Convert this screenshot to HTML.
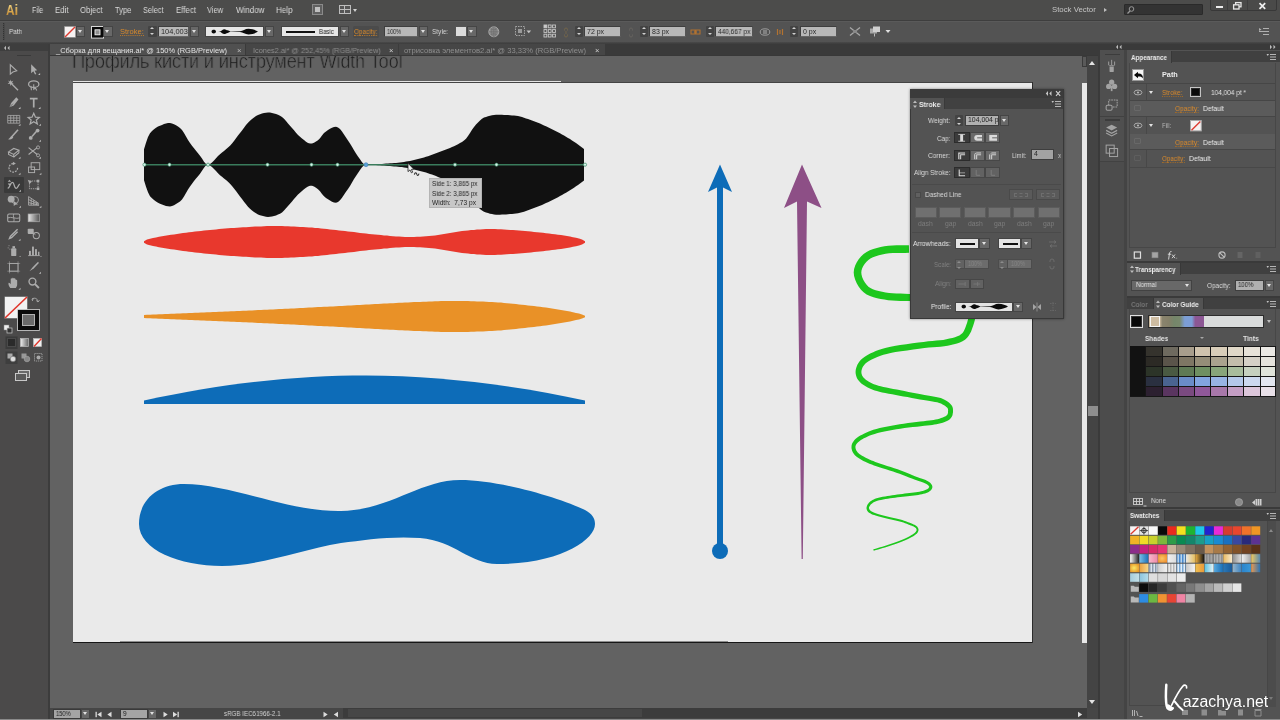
<!DOCTYPE html>
<html><head><meta charset="utf-8"><title>Ai</title>
<style>
html,body{margin:0;padding:0;background:#535353;}
body{width:1280px;height:720px;position:relative;overflow:hidden;font-family:"Liberation Sans",sans-serif;font-size:7px;color:#d6d6d6;}
#root div,#root span,.abs{position:absolute;box-sizing:border-box;}
#root span{white-space:nowrap;will-change:transform;}
#root{position:absolute;left:0;top:0;width:1280px;height:720px;overflow:hidden;}
</style></head><body><div id="root">
<div style="left:0px;top:0px;width:1280px;height:20px;background:#4c4c4b;"></div><div style="left:0px;top:19.8px;width:1280px;height:1px;background:#3e3e3e;"></div><div style="left:0px;top:20.8px;width:1280px;height:20.7px;background:#535353;border-top:1px solid #5a5a5a;"></div><div style="left:0px;top:41.5px;width:1280px;height:2.5px;background:linear-gradient(#4a4a4a,#3c3c3c);"></div><div style="left:0px;top:44px;width:1280px;height:12px;background:#3b3b3b;"></div><div style="left:50px;top:56px;width:1037px;height:652px;background:#626262;"></div><div style="left:72.7px;top:83px;width:959.5px;height:558.8px;background:#eaeaea;"></div><div style="left:72.7px;top:82px;width:960.5px;height:1px;background:#444;"></div><div style="left:72.7px;top:81px;width:488px;height:1px;background:#e4e4e4;"></div><div style="left:72.7px;top:641.8px;width:960.5px;height:1.2px;background:#161616;"></div><div style="left:1032.2px;top:82px;width:1px;height:561px;background:#2c2c2c;"></div><div style="left:120px;top:640.8px;width:608px;height:1px;background:#8e8e8e;"></div><div style="left:50px;top:56px;width:1034px;height:26px;overflow:hidden"><span id="ttl" style="left:22.3px;top:-7.4px;font-size:20.5px;line-height:24px;color:#1c1c1c;-webkit-text-stroke:0.6px #626262;transform-origin:0 0;transform:scaleX(0.888);letter-spacing:-0.2px">Профиль кисти и инструмент Width Tool</span></div><span style="left:6.3px;top:0.53px;font-size:15.5px;line-height:17.5px;color:#e3a53c;transform-origin:0 0;transform:scaleX(0.768);font-weight:bold;background:linear-gradient(#f2d27e 20%,#c98a2c 85%);-webkit-background-clip:text;background-clip:text;color:transparent;">Ai</span><span style="left:32px;top:5.05px;font-size:8.6px;line-height:10.6px;color:#dadada;transform-origin:0 0;transform:scaleX(0.808);">File</span><span style="left:55px;top:5.05px;font-size:8.6px;line-height:10.6px;color:#dadada;transform-origin:0 0;transform:scaleX(0.911);">Edit</span><span style="left:80px;top:5.05px;font-size:8.6px;line-height:10.6px;color:#dadada;transform-origin:0 0;transform:scaleX(0.905);">Object</span><span style="left:114.5px;top:5.05px;font-size:8.6px;line-height:10.6px;color:#dadada;transform-origin:0 0;transform:scaleX(0.885);">Type</span><span style="left:142.5px;top:5.05px;font-size:8.6px;line-height:10.6px;color:#dadada;transform-origin:0 0;transform:scaleX(0.858);">Select</span><span style="left:175.5px;top:5.05px;font-size:8.6px;line-height:10.6px;color:#dadada;transform-origin:0 0;transform:scaleX(0.916);">Effect</span><span style="left:207px;top:5.05px;font-size:8.6px;line-height:10.6px;color:#dadada;transform-origin:0 0;transform:scaleX(0.866);">View</span><span style="left:235.5px;top:5.05px;font-size:8.6px;line-height:10.6px;color:#dadada;transform-origin:0 0;transform:scaleX(0.932);">Window</span><span style="left:276px;top:5.05px;font-size:8.6px;line-height:10.6px;color:#dadada;transform-origin:0 0;transform:scaleX(0.933);">Help</span><div style="left:312px;top:4px;width:11px;height:11px;background:#606060;border:1px solid #8a8a8a;"><div style="left:2px;top:2px;width:5px;height:5px;background:#c0c0c0;"></div></div><div style="left:339px;top:5px;width:12px;height:9px;background:#bdbdbd;"><div style="left:1px;top:1px;width:4px;height:3px;background:#555;"></div><div style="left:6px;top:1px;width:5px;height:3px;background:#555;"></div><div style="left:1px;top:5px;width:4px;height:3px;background:#555;"></div><div style="left:6px;top:5px;width:5px;height:3px;background:#555;"></div></div><div style="left:352.5px;top:9px;border:2.5px solid transparent;border-top:3px solid #d0d0d0;width:0;height:0"></div><span style="left:1052px;top:4.84px;font-size:7.8px;line-height:9.8px;color:#c4c4c4;transform-origin:0 0;transform:scaleX(0.993);">Stock Vector</span><div style="left:1104px;top:7.5px;border:2.2px solid transparent;border-left:3px solid #bdbdbd;width:0;height:0"></div><div style="left:1124px;top:4px;width:79px;height:11px;background:#333;border:1px solid #2a2a2a;border-radius:1px;"></div><svg class="abs" style="left:1126px;top:5px" width="10" height="10"><circle cx="5.5" cy="4" r="2.3" fill="none" stroke="#999" stroke-width="1"/><path d="M4,6 L1.5,8.5" stroke="#999" stroke-width="1.2"/></svg><div style="left:1209.7px;top:-1px;width:67px;height:11.6px;background:#4a4a49;border:1px solid #383838;border-radius:0 0 2px 2px;"></div><div style="left:1227.3px;top:0px;width:1px;height:10px;background:#3e3e3e;"></div><div style="left:1247px;top:0px;width:1px;height:10px;background:#3e3e3e;"></div><div style="left:1215.8px;top:5.8px;width:7.6px;height:1.8px;background:#ececec;"></div><svg class="abs" style="left:1232px;top:0.5px" width="11" height="10"><rect x="3.6" y="1.6" width="5.4" height="4.2" fill="none" stroke="#e8e8e8" stroke-width="1.3"/><rect x="1.6" y="3.8" width="5.4" height="4.2" fill="#4a4a49" stroke="#e8e8e8" stroke-width="1.3"/></svg><svg class="abs" style="left:1257.5px;top:1.5px" width="9" height="8"><path d="M1.5,1.2 L7.2,6.8 M7.2,1.2 L1.5,6.8" stroke="#f0f0f0" stroke-width="1.7"/></svg><div style="left:3px;top:22.5px;width:2px;height:17px;background:#4a4a4a;border-left:1px dotted #333;"></div><span style="left:9.3px;top:27.33px;font-size:7.2px;line-height:9.2px;color:#dadada;transform-origin:0 0;transform:scaleX(0.891);">Path</span><svg class="abs" style="left:63.5px;top:25.8px" width="12" height="12"><rect x="0.4" y="0.4" width="11.2" height="11" fill="#f6f2f2" stroke="#8a8a8a" stroke-width="0.6"/><path d="M1,11 L11,1" stroke="#dd3a30" stroke-width="1.5"/></svg><div style="left:75.5px;top:26px;width:9.5px;height:11px;background:#686868;border:1px solid #454545;"><div style="left:1.25px;top:2.9px;border:2.5px solid transparent;border-top:3px solid #e0e0e0;width:0;height:0"></div></div><svg class="abs" style="left:90.5px;top:25.5px" width="13" height="13"><rect x="0.5" y="0.5" width="12" height="11.6" fill="#080808" stroke="#d8d8d8"/><rect x="4" y="3.8" width="5" height="5" fill="#8e8e8e" stroke="#f0f0f0" stroke-width="0.9"/></svg><div style="left:103px;top:26px;width:9.5px;height:11px;background:#686868;border:1px solid #454545;"><div style="left:1.25px;top:2.9px;border:2.5px solid transparent;border-top:3px solid #e0e0e0;width:0;height:0"></div></div><span style="left:120px;top:27.33px;font-size:7.2px;line-height:9.2px;color:#d98a2c;transform-origin:0 0;transform:scaleX(1.043);border-bottom:1px dotted #b9782a;height:9.4px;">Stroke:</span><div style="left:148.3px;top:25.8px;width:8.4px;height:11.2px;background:#434343;border-radius:1px;"></div><div style="left:150.3px;top:25.4px;border:2.2px solid transparent;border-bottom:2.8px solid #d0d0d0;width:0;height:0"></div><div style="left:150.3px;top:33px;border:2.2px solid transparent;border-top:2.8px solid #d0d0d0;width:0;height:0"></div><div style="left:157.5px;top:25.8px;width:31px;height:11.2px;background:#b8b8b8;border:1px solid #3e3e3e;border-right-color:#555;border-bottom-color:#666;"><span style="left:2.2px;top:0.33px;font-size:7px;line-height:9px;color:#2a2a2a;transform-origin:0 0;transform:scaleX(1.059);">104,003</span></div><div style="left:189.5px;top:26px;width:9.5px;height:11px;background:#686868;border:1px solid #454545;"><div style="left:1.25px;top:2.9px;border:2.5px solid transparent;border-top:3px solid #e0e0e0;width:0;height:0"></div></div><div style="left:205px;top:26px;width:59px;height:11.2px;background:#e6e6e6;border:1px solid #444;"></div><svg class="abs" style="left:205px;top:26px" width="60" height="11" viewBox="0 0 60 11"><path d="M6.5,5.6 C6.5,3 11,3 11,5.6 C11,5.6 12.5,5.5 14.5,5.5 C16,5.5 17.5,3.2 19.5,3.2 C20.5,3.2 21.5,4.3 22.5,4.3 C23.5,4.3 24.5,5.3 25.5,5.4 L35,5.2 C38,5 40,2.8 43.5,2.8 C47.5,2.8 51,4.4 53,5.6 C51,6.8 47.5,8.4 43.5,8.4 C40,8.4 38,6.2 35,6 L25.5,5.8 C24.5,5.9 23.5,6.9 22.5,6.9 C21.5,6.9 20.5,8 19.5,8 C17.5,8 16,5.7 14.5,5.7 C12.5,5.7 11,5.6 11,5.6 C11,8.2 6.5,8.2 6.5,5.6Z" fill="#0a0a0a"/></svg><div style="left:264.5px;top:26px;width:9.5px;height:11px;background:#686868;border:1px solid #454545;"><div style="left:1.25px;top:2.9px;border:2.5px solid transparent;border-top:3px solid #e0e0e0;width:0;height:0"></div></div><div style="left:280.8px;top:26px;width:58px;height:11.2px;background:#e6e6e6;border:1px solid #444;"><div style="left:4px;top:4.2px;width:29.5px;height:1.5px;background:#111;"></div><span style="left:37.7px;top:0.72px;font-size:6.6px;line-height:8.6px;color:#222;transform-origin:0 0;transform:scaleX(0.917);">Basic</span></div><div style="left:339.5px;top:26px;width:9.5px;height:11px;background:#686868;border:1px solid #454545;"><div style="left:1.25px;top:2.9px;border:2.5px solid transparent;border-top:3px solid #e0e0e0;width:0;height:0"></div></div><div style="left:352.5px;top:25.5px;width:26.5px;height:12px;background:#4b4b4b;border-radius:1.5px;"></div><span style="left:354px;top:27.33px;font-size:7.2px;line-height:9.2px;color:#d98a2c;transform-origin:0 0;transform:scaleX(0.890);border-bottom:1px dotted #b9782a;height:9.4px;">Opacity:</span><div style="left:383.8px;top:25.8px;width:34.5px;height:11.2px;background:#b8b8b8;border:1px solid #3e3e3e;border-right-color:#555;border-bottom-color:#666;"><span style="left:2.2px;top:0.33px;font-size:7px;line-height:9px;color:#2a2a2a;transform-origin:0 0;transform:scaleX(0.782);">100%</span></div><div style="left:418.8px;top:26px;width:9.5px;height:11px;background:#686868;border:1px solid #454545;"><div style="left:1.25px;top:2.9px;border:2.5px solid transparent;border-top:3px solid #e0e0e0;width:0;height:0"></div></div><span style="left:432px;top:27.33px;font-size:7.2px;line-height:9.2px;color:#dadada;transform-origin:0 0;transform:scaleX(0.900);">Style:</span><div style="left:455px;top:26px;width:11.5px;height:11.2px;background:#dcdcdc;border:1px solid #555;"></div><div style="left:467px;top:26px;width:9.5px;height:11px;background:#686868;border:1px solid #454545;"><div style="left:1.25px;top:2.9px;border:2.5px solid transparent;border-top:3px solid #e0e0e0;width:0;height:0"></div></div><svg class="abs" style="left:487px;top:24.5px" width="14" height="14"><circle cx="6.8" cy="6.8" r="5" fill="#8a8a8a" stroke="#b8b8b8" stroke-width="0.8"/><path d="M2,6.8 H11.6 M6.8,2 V11.6 M3.5,3.6 C5.5,5.2 8,5.2 10,3.6 M3.5,10 C5.5,8.4 8,8.4 10,10" stroke="#6a6a6a" stroke-width="0.6" fill="none"/><ellipse cx="6.8" cy="6.8" rx="2.2" ry="5" fill="none" stroke="#6a6a6a" stroke-width="0.5"/></svg><svg class="abs" style="left:514px;top:25px" width="20" height="13"><rect x="1.5" y="1.5" width="9" height="9" fill="none" stroke="#a4a4a4" stroke-dasharray="1.5 1"/><rect x="4" y="4" width="4" height="4" fill="#9a9a9a"/><path d="M12.5,5.5 l2.3,2.8 l2.3,-2.8z" fill="#c4c4c4"/></svg><svg class="abs" style="left:543px;top:23.5px" width="14" height="15"><g fill="none" stroke="#c8c8c8" stroke-width="0.9"><rect x="1" y="1" width="2.8" height="2.8" fill="#c8c8c8"/><rect x="5.3" y="1" width="2.8" height="2.8"/><rect x="9.6" y="1" width="2.8" height="2.8"/><rect x="1" y="5.6" width="2.8" height="2.8"/><rect x="5.3" y="5.6" width="2.8" height="2.8"/><rect x="9.6" y="5.6" width="2.8" height="2.8"/><rect x="1" y="10.2" width="2.8" height="2.8"/><rect x="5.3" y="10.2" width="2.8" height="2.8"/><rect x="9.6" y="10.2" width="2.8" height="2.8"/></g></svg><svg class="abs" style="left:561.5px;top:26.5px" width="8" height="11"><path d="M2.5,3.5 v-1 a1.5,1.5 0 0 1 3,0 v1 M2.5,7.5 v1 a1.5,1.5 0 0 0 3,0 v-1 M4,4 v3" stroke="#76664a" fill="none" stroke-width="0.9"/></svg><div style="left:574.6px;top:25.8px;width:8.4px;height:11.2px;background:#434343;border-radius:1px;"></div><div style="left:576.6px;top:25.4px;border:2.2px solid transparent;border-bottom:2.8px solid #d0d0d0;width:0;height:0"></div><div style="left:576.6px;top:33px;border:2.2px solid transparent;border-top:2.8px solid #d0d0d0;width:0;height:0"></div><div style="left:583.8px;top:25.8px;width:37.5px;height:11.2px;background:#b8b8b8;border:1px solid #3e3e3e;border-right-color:#555;border-bottom-color:#666;"><span style="left:2.2px;top:0.33px;font-size:7px;line-height:9px;color:#2a2a2a;transform-origin:0 0;transform:scaleX(0.993);">72 px</span></div><svg class="abs" style="left:626.5px;top:26.5px" width="8" height="11"><path d="M2.5,3.5 v-1 a1.5,1.5 0 0 1 3,0 v1 M2.5,7.5 v1 a1.5,1.5 0 0 0 3,0 v-1" stroke="#686460" fill="none" stroke-width="0.9"/></svg><div style="left:639.6px;top:25.8px;width:8.4px;height:11.2px;background:#434343;border-radius:1px;"></div><div style="left:641.6px;top:25.4px;border:2.2px solid transparent;border-bottom:2.8px solid #d0d0d0;width:0;height:0"></div><div style="left:641.6px;top:33px;border:2.2px solid transparent;border-top:2.8px solid #d0d0d0;width:0;height:0"></div><div style="left:648.8px;top:25.8px;width:37.5px;height:11.2px;background:#b8b8b8;border:1px solid #3e3e3e;border-right-color:#555;border-bottom-color:#666;"><span style="left:2.2px;top:0.33px;font-size:7px;line-height:9px;color:#2a2a2a;transform-origin:0 0;transform:scaleX(0.993);">83 px</span></div><svg class="abs" style="left:690px;top:26.5px" width="12" height="10"><path d="M1,3 h4 v4 h-4z M6,3 h4 v4 h-4z M4,5 h3" stroke="#b27230" fill="none" stroke-width="1.1"/></svg><div style="left:705.8px;top:25.8px;width:8.4px;height:11.2px;background:#434343;border-radius:1px;"></div><div style="left:707.8px;top:25.4px;border:2.2px solid transparent;border-bottom:2.8px solid #d0d0d0;width:0;height:0"></div><div style="left:707.8px;top:33px;border:2.2px solid transparent;border-top:2.8px solid #d0d0d0;width:0;height:0"></div><div style="left:715px;top:25.8px;width:37.5px;height:11.2px;background:#b8b8b8;border:1px solid #3e3e3e;border-right-color:#555;border-bottom-color:#666;"><span style="left:2.2px;top:0.33px;font-size:7px;line-height:9px;color:#2a2a2a;transform-origin:0 0;transform:scaleX(0.932);">440,667 px</span></div><svg class="abs" style="left:758px;top:25.5px" width="14" height="12"><ellipse cx="7" cy="6" rx="4.8" ry="3.2" fill="none" stroke="#a4a4a4" stroke-width="0.9"/><rect x="5" y="4" width="4" height="4" fill="#808080"/></svg><svg class="abs" style="left:775px;top:26.5px" width="10" height="10"><path d="M2.5,2 v6 M5,3 v4 M7.5,2 v6" stroke="#b27230" stroke-width="1.2"/></svg><div style="left:790.1px;top:25.8px;width:8.4px;height:11.2px;background:#434343;border-radius:1px;"></div><div style="left:792.1px;top:25.4px;border:2.2px solid transparent;border-bottom:2.8px solid #d0d0d0;width:0;height:0"></div><div style="left:792.1px;top:33px;border:2.2px solid transparent;border-top:2.8px solid #d0d0d0;width:0;height:0"></div><div style="left:800px;top:25.8px;width:37.2px;height:11.2px;background:#b8b8b8;border:1px solid #3e3e3e;border-right-color:#555;border-bottom-color:#666;"><span style="left:2.2px;top:0.33px;font-size:7px;line-height:9px;color:#2a2a2a;transform-origin:0 0;transform:scaleX(0.967);">0 px</span></div><svg class="abs" style="left:848px;top:24.5px" width="14" height="13"><path d="M2,2.5 L12,10.5 M12,2.5 L2,10.5" stroke="#a8a8a8" stroke-width="1.3"/><rect x="5" y="5" width="4" height="3" fill="#8a8a8a"/></svg><svg class="abs" style="left:868px;top:25px" width="26" height="13"><rect x="2" y="3.5" width="7" height="5" fill="#a8a8a8"/><rect x="5" y="1.5" width="7" height="5.5" fill="#d0d0d0"/><path d="M6.5,8.5 v3" stroke="#bbb"/><path d="M17.5,5 l2.5,3 l2.5,-3z" fill="#e0e0e0"/></svg><svg class="abs" style="left:1258px;top:27px" width="12" height="9"><path d="M5,1.5 h6 M1,4.5 h10 M5,7.5 h6" stroke="#b0b0b0" stroke-width="1"/><path d="M1,1 l2.5,1.5 l-2.5,1.5z" fill="#b0b0b0"/></svg><div style="left:50px;top:44px;width:555px;height:11.6px;background:#464646;"></div><div style="left:50px;top:44px;width:195.5px;height:11.6px;background:#505050;border-right:1px solid #3a3a3a;"></div><span style="left:56.3px;top:45.63px;font-size:7.4px;line-height:9.4px;color:#e4e4e4;transform-origin:0 0;transform:scaleX(1.012);">_Сборка для вещания.ai* @ 150% (RGB/Preview)</span><span style="left:236.5px;top:45.59px;font-size:7.5px;line-height:9.5px;color:#bcbcbc;transform-origin:0 0;transform:scaleX(1.027);">×</span><span style="left:252.5px;top:45.63px;font-size:7.4px;line-height:9.4px;color:#8e8e8e;transform-origin:0 0;transform:scaleX(0.993);">Icones2.ai* @ 252,45% (RGB/Preview)</span><span style="left:388.8px;top:45.59px;font-size:7.5px;line-height:9.5px;color:#cfcfcf;transform-origin:0 0;transform:scaleX(1.027);">×</span><div style="left:397.5px;top:44px;width:1px;height:11.6px;background:#3c3c3c;"></div><span style="left:403.8px;top:45.63px;font-size:7.4px;line-height:9.4px;color:#8e8e8e;transform-origin:0 0;transform:scaleX(1.032);">отрисовка элементов2.ai* @ 33,33% (RGB/Preview)</span><span style="left:594.5px;top:45.59px;font-size:7.5px;line-height:9.5px;color:#cfcfcf;transform-origin:0 0;transform:scaleX(1.027);">×</span><div style="left:604.5px;top:44px;width:676px;height:11.6px;background:#3a3a3a;"></div><div style="left:0px;top:55.4px;width:1100px;height:0.8px;background:#383838;"></div><div style="left:0px;top:44px;width:47.5px;height:676px;background:#4b4a4a;"></div><div style="left:0px;top:44px;width:48px;height:7px;background:#3e3e3e;"></div><svg class="abs" style="left:1.5px;top:44.8px" width="10" height="6"><path d="M4,0.8 l-2,2.2 l2,2.2z M7.5,0.8 l-2,2.2 l2,2.2z" fill="#bbb"/></svg><div style="left:47.5px;top:44px;width:2.2px;height:676px;background:#3c3c3c;"></div><div style="left:17px;top:54.5px;width:14px;height:1.5px;background:#3a3a3a;"></div><div style="left:4px;top:177px;width:20px;height:16px;background:#3a3a3a;border-radius:1px;"></div><svg class="abs" style="left:6.26px;top:62.62px" width="15.48" height="13.76" viewBox="0 0 18 16"><path d="M5,2 L5,13 L8,10.5 L12.5,9 Z" fill="none" stroke="#acacac" stroke-width="1.3"/></svg><svg class="abs" style="left:26.26px;top:62.62px" width="15.48" height="13.76" viewBox="0 0 18 16"><path d="M6,1.5 L6,12 L8.5,9.5 L10.5,13.5 L12,12.8 L10,9 L13,8.5 Z" fill="#acacac"/><path d="M14,14 l2.4,0 l0,-2.4z" fill="#bdbdbd"/></svg><svg class="abs" style="left:6.26px;top:79.07px" width="15.48" height="13.76" viewBox="0 0 18 16"><path d="M5,4 L14,13" stroke="#acacac" stroke-width="1.6"/><path d="M5,0.5 L6,3 L8.5,2 L7,4 L9,5.5 L6.3,5.5 L5.5,8 L4.5,5.5 L1.8,5.8 L3.8,4 L2.5,1.8 L4.6,3Z" fill="#acacac"/></svg><svg class="abs" style="left:26.26px;top:79.07px" width="15.48" height="13.76" viewBox="0 0 18 16"><ellipse cx="9" cy="6" rx="6" ry="3.8" fill="none" stroke="#acacac" stroke-width="1.5"/><path d="M6,8 C5,10 7,11 6,13 M9,6 l0,6 l2,-1.5 l1.5,3" stroke="#acacac" fill="none" stroke-width="1.2"/></svg><svg class="abs" style="left:6.26px;top:95.52px" width="15.48" height="13.76" viewBox="0 0 18 16"><path d="M12,1.5 L14.5,4 L9,11 L4,13 L6,8 Z" fill="#acacac"/><path d="M4,13 L8,9" stroke="#555" stroke-width="0.8"/><path d="M14.5,15 l2.4,0 l0,-2.4z" fill="#bdbdbd"/></svg><svg class="abs" style="left:26.26px;top:95.52px" width="15.48" height="13.76" viewBox="0 0 18 16"><path d="M4.5,2 H13.5 V4 H10 V13.5 H8 V4 H4.5Z" fill="#acacac"/><path d="M14.5,15 l2.4,0 l0,-2.4z" fill="#bdbdbd"/></svg><svg class="abs" style="left:6.26px;top:111.97px" width="15.48" height="13.76" viewBox="0 0 18 16"><path d="M2,4 H16 M2,7 H16 M2,10 H16 M2,13 H16 M2,4 V13 M5.5,4 V13 M9,4 V13 M12.5,4 V13 M16,4 V13" stroke="#acacac" stroke-width="0.9" fill="none"/><path d="M14.5,16 l2.4,0 l0,-2.4z" fill="#bdbdbd"/></svg><svg class="abs" style="left:26.26px;top:111.97px" width="15.48" height="13.76" viewBox="0 0 18 16"><path d="M9,1.5 L11,6 L15.5,6.3 L12,9.3 L13.2,14 L9,11.3 L4.8,14 L6,9.3 L2.5,6.3 L7,6Z" fill="none" stroke="#acacac" stroke-width="1.4"/><path d="M15,16 l2.4,0 l0,-2.4z" fill="#bdbdbd"/></svg><svg class="abs" style="left:6.26px;top:128.42px" width="15.48" height="13.76" viewBox="0 0 18 16"><path d="M14,2 L7,10" stroke="#acacac" stroke-width="1.8"/><path d="M7,9 C5,9.5 5,12 2.5,13 C5,14 8,13 8.5,10.5Z" fill="#acacac"/></svg><svg class="abs" style="left:26.26px;top:128.42px" width="15.48" height="13.76" viewBox="0 0 18 16"><path d="M13,3 L7,10" stroke="#acacac" stroke-width="1.8"/><circle cx="13.5" cy="3" r="2.2" fill="#acacac"/><circle cx="5.5" cy="11.5" r="2.2" fill="#acacac"/><path d="M15,16 l2.4,0 l0,-2.4z" fill="#bdbdbd"/></svg><svg class="abs" style="left:6.26px;top:144.87px" width="15.48" height="13.76" viewBox="0 0 18 16"><path d="M3,8 L9,4 L15,6 L9,11Z" fill="none" stroke="#acacac" stroke-width="1.3"/><path d="M3,8 L3,11 L9,14 L9,11 M9,14 L15,9 L15,6" fill="none" stroke="#acacac" stroke-width="1.2"/><path d="M14.5,16 l2.4,0 l0,-2.4z" fill="#bdbdbd"/></svg><svg class="abs" style="left:26.26px;top:144.87px" width="15.48" height="13.76" viewBox="0 0 18 16"><path d="M3,3 L13,11 M3,11 L13,3" stroke="#acacac" stroke-width="1.3"/><circle cx="14" cy="12" r="1.8" fill="none" stroke="#acacac"/><circle cx="14" cy="2.8" r="1.8" fill="none" stroke="#acacac"/><path d="M15,16 l2.4,0 l0,-2.4z" fill="#bdbdbd"/></svg><svg class="abs" style="left:6.26px;top:161.32px" width="15.48" height="13.76" viewBox="0 0 18 16"><path d="M13.5,8 A5,5 0 1 1 9,3" fill="none" stroke="#acacac" stroke-width="1.4" stroke-dasharray="2.2 1.2"/><path d="M8,1 L11.5,3 L8,5Z" fill="#acacac"/><path d="M14.5,16 l2.4,0 l0,-2.4z" fill="#bdbdbd"/></svg><svg class="abs" style="left:26.26px;top:161.32px" width="15.48" height="13.76" viewBox="0 0 18 16"><rect x="3" y="7" width="7" height="6.5" fill="none" stroke="#acacac" stroke-width="1.1"/><rect x="6" y="2" width="10" height="8" fill="none" stroke="#acacac" stroke-width="1.1"/><path d="M15.5,16 l2.4,0 l0,-2.4z" fill="#bdbdbd"/></svg><svg class="abs" style="left:6.26px;top:177.77px" width="15.48" height="13.76" viewBox="0 0 18 16"><path d="M2,12 C5,11 5,5 7.5,5 C10,5 9,12 12,12 C14,12 14,8 16,7" fill="none" stroke="#acacac" stroke-width="1.5"/><path d="M4,2 l2,2.5 h-4z M4,9 l2,-2.5 h-4z" fill="#acacac"/><path d="M15,16 l2.4,0 l0,-2.4z" fill="#bdbdbd"/></svg><svg class="abs" style="left:26.26px;top:177.77px" width="15.48" height="13.76" viewBox="0 0 18 16"><rect x="4" y="3.5" width="10" height="9" fill="none" stroke="#acacac" stroke-width="1" stroke-dasharray="1.6 1"/><path d="M2,2 l5,2 l-3,3z" fill="#acacac"/><rect x="12.5" y="2" width="3" height="3" fill="#acacac"/><rect x="12.5" y="11" width="3" height="3" fill="#acacac"/></svg><svg class="abs" style="left:6.26px;top:194.22px" width="15.48" height="13.76" viewBox="0 0 18 16"><circle cx="6" cy="6" r="4" fill="#aaa"/><circle cx="10.5" cy="7" r="4" fill="none" stroke="#acacac"/><path d="M9,8 L9,14 L11,12.5 L14,12Z" fill="#acacac"/><path d="M15,16 l2.4,0 l0,-2.4z" fill="#bdbdbd"/></svg><svg class="abs" style="left:26.26px;top:194.22px" width="15.48" height="13.76" viewBox="0 0 18 16"><path d="M3,3 V13 H15 M6,5 V13 M9,7 V13 M12,9 V13 M3,3 L15,11 M3,6.5 L15,12 M3,10 L15,13" stroke="#acacac" stroke-width="1" fill="none"/><path d="M15.5,16 l2.4,0 l0,-2.4z" fill="#bdbdbd"/></svg><svg class="abs" style="left:6.26px;top:210.67px" width="15.48" height="13.76" viewBox="0 0 18 16"><rect x="2" y="3.5" width="14" height="9" rx="1.5" fill="none" stroke="#acacac" stroke-width="1.2"/><path d="M2,8 C6,6 12,10 16,8 M9,3.5 C7.5,6 10.5,10 9,12.5" stroke="#acacac" fill="none"/></svg><svg class="abs" style="left:26.26px;top:210.67px" width="15.48" height="13.76" viewBox="0 0 18 16"><defs><linearGradient id="tg"><stop offset="0" stop-color="#e8e8e8"/><stop offset="1" stop-color="#555"/></linearGradient></defs><rect x="2.5" y="3.5" width="13" height="9" fill="url(#tg)" stroke="#acacac" stroke-width="0.8"/></svg><svg class="abs" style="left:6.26px;top:227.12px" width="15.48" height="13.76" viewBox="0 0 18 16"><path d="M13.5,2.5 L11,5 M12,4 L5,11 L4,13.5 L6.5,12.5 L13.5,5.5" stroke="#acacac" stroke-width="1.6" fill="none"/><path d="M14.5,16 l2.4,0 l0,-2.4z" fill="#bdbdbd"/></svg><svg class="abs" style="left:26.26px;top:227.12px" width="15.48" height="13.76" viewBox="0 0 18 16"><rect x="2" y="2" width="7" height="6" rx="1" fill="#acacac"/><circle cx="12" cy="10" r="3.6" fill="none" stroke="#acacac" stroke-width="1.2"/><path d="M7,6 L11,9" stroke="#acacac"/></svg><svg class="abs" style="left:6.26px;top:243.57px" width="15.48" height="13.76" viewBox="0 0 18 16"><rect x="6" y="5" width="6" height="9" rx="1" fill="#acacac"/><rect x="7.5" y="2.5" width="3" height="2.5" fill="#acacac"/><path d="M3,2 h1 M2,4.5 h1 M4,6 h1" stroke="#acacac"/><path d="M14.5,16 l2.4,0 l0,-2.4z" fill="#bdbdbd"/></svg><svg class="abs" style="left:26.26px;top:243.57px" width="15.48" height="13.76" viewBox="0 0 18 16"><path d="M2.5,13.5 H16" stroke="#acacac"/><rect x="3.5" y="8" width="2.2" height="5.5" fill="#acacac"/><rect x="7" y="3" width="2.2" height="10.5" fill="#acacac"/><rect x="10.5" y="6" width="2.2" height="7.5" fill="#acacac"/><rect x="14" y="9" width="1.6" height="4.5" fill="#acacac"/><path d="M15.5,16 l2.4,0 l0,-2.4z" fill="#bdbdbd"/></svg><svg class="abs" style="left:6.26px;top:260.02px" width="15.48" height="13.76" viewBox="0 0 18 16"><rect x="4" y="4" width="10" height="9" fill="none" stroke="#acacac" stroke-width="1"/><path d="M1.5,4 H16.5 M1.5,13 H16.5 M4,1.5 V15.5 M14,1.5 V15.5" stroke="#acacac" stroke-width="0.6"/></svg><svg class="abs" style="left:26.26px;top:260.02px" width="15.48" height="13.76" viewBox="0 0 18 16"><path d="M14,2 L8,8 L4,13 L9,10 L15,3.5Z" fill="#acacac"/><path d="M15,16 l2.4,0 l0,-2.4z" fill="#bdbdbd"/></svg><svg class="abs" style="left:6.26px;top:276.47px" width="15.48" height="13.76" viewBox="0 0 18 16"><path d="M5,14 C3,11 2.5,9 3,8 C4,7.5 5,9 5.5,9.5 L5.5,3.5 C5.5,2.5 7,2.5 7,3.5 L7.3,2.5 C7.5,1.6 9,1.8 9,2.8 L9.3,3 C9.8,2.2 11,2.5 11,3.4 L11.3,4.5 C12,4 13,4.3 13,5.3 L13,10 C13,12 12,13 11.5,14Z" fill="#acacac"/><path d="M14.5,16 l2.4,0 l0,-2.4z" fill="#bdbdbd"/></svg><svg class="abs" style="left:26.26px;top:276.47px" width="15.48" height="13.76" viewBox="0 0 18 16"><circle cx="7.5" cy="6.5" r="4" fill="none" stroke="#acacac" stroke-width="1.6"/><path d="M10.5,9.5 L15,14" stroke="#acacac" stroke-width="2.2"/></svg><svg class="abs" style="left:3px;top:294px" width="42" height="40" viewBox="0 0 42 40"><rect x="1.5" y="2.5" width="23" height="22" fill="#f2f2f2" stroke="#5a5a5a" stroke-width="0.6"/><path d="M2,24 L24,3" stroke="#e0352b" stroke-width="1.6"/><rect x="14.5" y="15.5" width="22" height="21" fill="#0a0a0a" stroke="#d8d8d8" stroke-width="0.8"/><rect x="19.5" y="20.5" width="12" height="11" fill="#6a6a6a" stroke="#d0d0d0" stroke-width="0.8"/><path d="M29,5 c3,-2 6,0 6,3 M35,8 l-1.8,-1.5 M35,8 l1.5,-1.8 M29,5 l2,-0.2 M29,5 l0.6,2" stroke="#aaa" fill="none" stroke-width="0.9"/><rect x="1" y="31" width="5" height="5" fill="#eee" stroke="#888" stroke-width="0.5"/><rect x="4" y="34" width="5" height="5" fill="#333" stroke="#ccc" stroke-width="0.7"/></svg><svg class="abs" style="left:5px;top:336px" width="40" height="14" viewBox="0 0 40 14"><rect x="0.5" y="0.5" width="12" height="12.5" fill="#3b3b3b"/><rect x="2.5" y="2.5" width="8" height="8" fill="#2a2a2a" stroke="#4a4a4a"/><defs><linearGradient id="g2"><stop offset="0" stop-color="#eee"/><stop offset="1" stop-color="#666"/></linearGradient></defs><rect x="15.5" y="2.5" width="8" height="8" fill="url(#g2)" stroke="#bbb" stroke-width="0.7"/><rect x="28.5" y="2.5" width="8" height="8" fill="#f0f0f0" stroke="#bbb" stroke-width="0.7"/><path d="M29,10.5 L36.5,2.5" stroke="#e0352b" stroke-width="1.4"/></svg><svg class="abs" style="left:5px;top:351px" width="40" height="14" viewBox="0 0 40 14"><rect x="0.5" y="0.5" width="12" height="12.5" fill="#3e3e3e"/><rect x="2.5" y="2.5" width="5" height="5" fill="#aaa"/><circle cx="8" cy="8" r="2.8" fill="#ddd" stroke="#666" stroke-width="0.6"/><rect x="16.5" y="2.5" width="5" height="5" fill="#999"/><circle cx="22" cy="8" r="2.8" fill="#888" stroke="#aaa" stroke-width="0.6"/><rect x="29.5" y="2.5" width="7.5" height="7.5" fill="none" stroke="#999" stroke-dasharray="1.2 0.8"/><circle cx="33.5" cy="6.5" r="2" fill="#aaa"/></svg><svg class="abs" style="left:14px;top:369px" width="18" height="14" viewBox="0 0 18 14"><rect x="4.5" y="1.5" width="11" height="7" fill="#6a6a6a" stroke="#c8c8c8"/><rect x="1.5" y="4.5" width="11" height="7" fill="#5a5a5a" stroke="#c8c8c8"/></svg><div style="left:1082px;top:56px;width:5px;height:11px;background:#5a5a5a;border:1px solid #3a3a3a;"></div><div style="left:1082.4px;top:82.5px;width:4.2px;height:560px;background:#e8e8e8;"></div><div style="left:1087px;top:56px;width:11px;height:652px;background:#444;"></div><div style="left:1088.5px;top:57.5px;border:3.6px solid transparent;border-bottom:4.6px solid #e4e4e4;width:0;height:0"></div><div style="left:1088.5px;top:699.5px;border:3.6px solid transparent;border-top:4.6px solid #e4e4e4;width:0;height:0"></div><div style="left:1087.5px;top:405.8px;width:10px;height:10.2px;background:#8e8e8e;"></div><div style="left:1098px;top:44px;width:2px;height:676px;background:#3a3a3a;"></div><div style="left:50px;top:708px;width:1048px;height:12px;background:#464646;"></div><div style="left:52.5px;top:709px;width:28px;height:10px;background:#a4a4a4;border:1px solid #3a3a3a;"><span style="left:2.3px;top:0.02px;font-size:6.6px;line-height:8.6px;color:#222;transform-origin:0 0;transform:scaleX(0.871);">150%</span></div><div style="left:80.5px;top:709px;width:9.5px;height:10px;background:#686868;border:1px solid #454545;"><div style="left:1.25px;top:2.4px;border:2.5px solid transparent;border-top:3px solid #e0e0e0;width:0;height:0"></div></div><svg class="abs" style="left:93px;top:710px" width="90" height="9"><g fill="#dcdcdc"><rect x="2.5" y="1.8" width="1.3" height="5.4"/><path d="M8.5,1.8 v5.4 l-4.2,-2.7z"/><path d="M18.5,1.8 v5.4 l-4.2,-2.7z"/><path d="M70.5,1.8 v5.4 l4.2,-2.7z"/><path d="M80,1.8 v5.4 l4.2,-2.7z"/><rect x="84.5" y="1.8" width="1.3" height="5.4"/></g></svg><div style="left:119.5px;top:709px;width:28px;height:10px;background:#a4a4a4;border:1px solid #3a3a3a;"><span style="left:2.3px;top:0.02px;font-size:6.6px;line-height:8.6px;color:#222;transform-origin:0 0;transform:scaleX(1.000);">9</span></div><div style="left:147.5px;top:709px;width:9.5px;height:10px;background:#686868;border:1px solid #454545;"><div style="left:1.25px;top:2.4px;border:2.5px solid transparent;border-top:3px solid #e0e0e0;width:0;height:0"></div></div><span style="left:223.5px;top:709.92px;font-size:6.8px;line-height:8.8px;color:#d4d4d4;transform-origin:0 0;transform:scaleX(0.911);">sRGB IEC61966-2.1</span><svg class="abs" style="left:320px;top:709.5px" width="22" height="9"><path d="M3.5,1.8 v5.4 l4.2,-2.7z M18,1.8 v5.4 l-4.2,-2.7z" fill="#dcdcdc"/></svg><div style="left:343px;top:708.2px;width:744px;height:10px;background:#3c3c3c;"></div><div style="left:348px;top:709px;width:294px;height:8.2px;background:#464646;"></div><svg class="abs" style="left:1076px;top:709.5px" width="8" height="9"><path d="M2,1.8 v5.4 l4.2,-2.7z" fill="#dcdcdc"/></svg>
<svg class="abs" style="left:0;top:0" width="1280" height="720" viewBox="0 0 1280 720">
<path d="M144.0,149.2 L146.0,142.7 L148.0,137.1 L150.0,133.2 L152.0,131.1 L154.0,129.3 L156.0,127.8 L158.0,126.6 L160.0,125.7 L162.0,124.9 L164.0,124.1 L166.0,123.5 L168.0,123.1 L170.0,123.0 L172.0,123.4 L174.0,124.2 L176.0,125.3 L178.0,126.6 L180.0,128.0 L182.0,130.0 L184.0,133.0 L186.0,136.4 L188.0,139.9 L190.0,143.0 L192.0,145.7 L194.0,148.3 L196.0,150.8 L198.0,153.2 L200.0,155.7 L202.0,158.6 L204.0,161.7 L206.0,164.1 L208.0,164.7 L210.0,163.9 L212.0,162.5 L214.0,160.5 L216.0,158.3 L218.0,156.1 L220.0,154.2 L222.0,152.6 L224.0,151.0 L226.0,149.3 L228.0,147.6 L230.0,145.7 L232.0,143.5 L234.0,141.0 L236.0,138.3 L238.0,135.6 L240.0,133.0 L242.0,130.4 L244.0,127.7 L246.0,125.1 L248.0,122.7 L250.0,120.7 L252.0,119.0 L254.0,117.5 L256.0,116.1 L258.0,115.0 L260.0,114.2 L262.0,113.6 L264.0,113.1 L266.0,112.7 L268.0,112.5 L270.0,112.6 L272.0,112.9 L274.0,113.4 L276.0,114.0 L278.0,114.8 L280.0,115.7 L282.0,117.0 L284.0,118.8 L286.0,121.1 L288.0,123.5 L290.0,125.7 L292.0,127.9 L294.0,130.3 L296.0,132.7 L298.0,134.9 L300.0,136.7 L302.0,138.4 L304.0,140.1 L306.0,141.7 L308.0,142.9 L310.0,143.6 L312.0,143.6 L314.0,142.8 L316.0,141.6 L318.0,140.2 L320.0,138.2 L322.0,135.5 L324.0,133.1 L326.0,131.5 L328.0,130.1 L330.0,128.8 L332.0,127.7 L334.0,127.0 L336.0,126.7 L338.0,127.4 L340.0,129.1 L342.0,131.6 L344.0,134.6 L346.0,137.6 L348.0,140.4 L350.0,143.4 L352.0,146.8 L354.0,150.3 L356.0,153.5 L358.0,156.4 L360.0,159.3 L362.0,162.2 L364.0,164.2 L366.0,164.7 L368.0,164.7 L370.0,164.6 L372.0,164.5 L374.0,164.4 L376.0,164.4 L378.0,164.2 L380.0,164.1 L382.0,163.9 L384.0,163.8 L386.0,163.6 L388.0,163.5 L390.0,163.3 L392.0,163.2 L394.0,163.0 L396.0,162.9 L398.0,162.7 L400.0,162.5 L402.0,162.3 L404.0,162.0 L406.0,161.6 L408.0,161.3 L410.0,160.9 L412.0,160.5 L414.0,160.0 L416.0,159.5 L418.0,159.0 L420.0,158.5 L422.0,158.0 L424.0,157.4 L426.0,156.8 L428.0,156.2 L430.0,155.5 L432.0,154.8 L434.0,154.1 L436.0,153.3 L438.0,152.5 L440.0,151.7 L442.0,150.9 L444.0,150.2 L446.0,149.4 L448.0,148.7 L450.0,147.9 L452.0,147.1 L454.0,146.2 L456.0,145.2 L458.0,144.2 L460.0,143.1 L462.0,141.9 L464.0,140.5 L466.0,138.7 L468.0,136.1 L470.0,133.0 L472.0,129.7 L474.0,126.9 L476.0,124.6 L478.0,122.5 L480.0,120.5 L482.0,118.8 L484.0,117.6 L486.0,116.9 L488.0,116.3 L490.0,115.7 L492.0,115.3 L494.0,114.9 L496.0,114.7 L498.0,114.7 L500.0,114.7 L502.0,114.8 L504.0,114.9 L506.0,115.0 L508.0,115.1 L510.0,115.3 L512.0,115.4 L514.0,115.6 L516.0,115.8 L518.0,116.1 L520.0,116.6 L522.0,117.1 L524.0,117.7 L526.0,118.4 L528.0,119.1 L530.0,119.8 L532.0,120.6 L534.0,121.3 L536.0,122.1 L538.0,122.8 L540.0,123.6 L542.0,124.5 L544.0,125.4 L546.0,126.3 L548.0,127.2 L550.0,128.2 L552.0,129.2 L554.0,130.2 L556.0,131.2 L558.0,132.2 L560.0,133.3 L562.0,134.4 L564.0,135.6 L566.0,136.7 L568.0,137.9 L570.0,139.1 L572.0,140.4 L574.0,141.7 L576.0,143.1 L578.0,144.5 L580.0,146.0 L582.0,147.5 L584.0,149.0 L584.0,180.4 L582.0,181.9 L580.0,183.4 L578.0,184.9 L576.0,186.3 L574.0,187.7 L572.0,189.0 L570.0,190.3 L568.0,191.5 L566.0,192.7 L564.0,193.8 L562.0,195.0 L560.0,196.1 L558.0,197.2 L556.0,198.2 L554.0,199.2 L552.0,200.2 L550.0,201.2 L548.0,202.2 L546.0,203.1 L544.0,204.0 L542.0,204.9 L540.0,205.8 L538.0,206.6 L536.0,207.3 L534.0,208.1 L532.0,208.8 L530.0,209.6 L528.0,210.3 L526.0,211.0 L524.0,211.7 L522.0,212.3 L520.0,212.8 L518.0,213.3 L516.0,213.6 L514.0,213.8 L512.0,214.0 L510.0,214.1 L508.0,214.3 L506.0,214.4 L504.0,214.5 L502.0,214.6 L500.0,214.7 L498.0,214.7 L496.0,214.7 L494.0,214.5 L492.0,214.1 L490.0,213.7 L488.0,213.1 L486.0,212.5 L484.0,211.8 L482.0,210.6 L480.0,208.9 L478.0,206.9 L476.0,204.8 L474.0,202.5 L472.0,199.7 L470.0,196.4 L468.0,193.3 L466.0,190.7 L464.0,188.9 L462.0,187.5 L460.0,186.2 L458.0,185.2 L456.0,184.2 L454.0,183.2 L452.0,182.3 L450.0,181.5 L448.0,180.7 L446.0,180.0 L444.0,179.2 L442.0,178.5 L440.0,177.7 L438.0,176.9 L436.0,176.1 L434.0,175.3 L432.0,174.6 L430.0,173.9 L428.0,173.2 L426.0,172.6 L424.0,172.0 L422.0,171.4 L420.0,170.9 L418.0,170.4 L416.0,169.9 L414.0,169.4 L412.0,168.9 L410.0,168.5 L408.0,168.1 L406.0,167.8 L404.0,167.4 L402.0,167.1 L400.0,166.9 L398.0,166.7 L396.0,166.5 L394.0,166.4 L392.0,166.2 L390.0,166.1 L388.0,165.9 L386.0,165.8 L384.0,165.6 L382.0,165.5 L380.0,165.3 L378.0,165.2 L376.0,165.0 L374.0,165.0 L372.0,164.9 L370.0,164.8 L368.0,164.7 L366.0,164.7 L364.0,165.2 L362.0,167.2 L360.0,170.1 L358.0,173.0 L356.0,175.9 L354.0,179.1 L352.0,182.6 L350.0,186.0 L348.0,189.0 L346.0,191.8 L344.0,194.8 L342.0,197.8 L340.0,200.3 L338.0,202.0 L336.0,202.7 L334.0,202.4 L332.0,201.7 L330.0,200.6 L328.0,199.3 L326.0,197.9 L324.0,196.3 L322.0,193.9 L320.0,191.2 L318.0,189.2 L316.0,187.8 L314.0,186.6 L312.0,185.8 L310.0,185.8 L308.0,186.5 L306.0,187.7 L304.0,189.3 L302.0,191.0 L300.0,192.7 L298.0,194.5 L296.0,196.7 L294.0,199.1 L292.0,201.5 L290.0,203.7 L288.0,205.9 L286.0,208.3 L284.0,210.6 L282.0,212.4 L280.0,213.7 L278.0,214.6 L276.0,215.4 L274.0,216.0 L272.0,216.5 L270.0,216.8 L268.0,216.9 L266.0,216.7 L264.0,216.3 L262.0,215.8 L260.0,215.2 L258.0,214.4 L256.0,213.3 L254.0,211.9 L252.0,210.4 L250.0,208.7 L248.0,206.7 L246.0,204.3 L244.0,201.7 L242.0,199.0 L240.0,196.4 L238.0,193.8 L236.0,191.1 L234.0,188.4 L232.0,185.9 L230.0,183.7 L228.0,181.8 L226.0,180.1 L224.0,178.4 L222.0,176.8 L220.0,175.2 L218.0,173.3 L216.0,171.1 L214.0,168.9 L212.0,166.9 L210.0,165.5 L208.0,164.7 L206.0,165.3 L204.0,167.7 L202.0,170.8 L200.0,173.7 L198.0,176.2 L196.0,178.6 L194.0,181.1 L192.0,183.7 L190.0,186.4 L188.0,189.5 L186.0,193.0 L184.0,196.4 L182.0,199.4 L180.0,201.4 L178.0,202.8 L176.0,204.1 L174.0,205.2 L172.0,206.0 L170.0,206.4 L168.0,206.3 L166.0,205.9 L164.0,205.3 L162.0,204.5 L160.0,203.7 L158.0,202.8 L156.0,201.6 L154.0,200.1 L152.0,198.3 L150.0,196.2 L148.0,192.3 L146.0,186.7 L144.0,180.2Z" fill="#111"/>
<path d="M144.0,241.2 L147.0,239.6 L150.0,238.7 L153.0,238.0 L156.0,237.4 L159.0,236.8 L162.0,236.3 L165.0,235.8 L168.0,235.3 L171.0,234.8 L174.0,234.4 L177.0,234.0 L180.0,233.5 L183.0,233.1 L186.0,232.7 L189.0,232.3 L192.0,231.9 L195.0,231.6 L198.0,231.2 L201.0,230.9 L204.0,230.6 L207.0,230.3 L210.0,230.0 L213.0,229.7 L216.0,229.4 L219.0,229.1 L222.0,228.8 L225.0,228.6 L228.0,228.3 L231.0,228.1 L234.0,227.9 L237.0,227.7 L240.0,227.5 L243.0,227.3 L246.0,227.2 L249.0,227.0 L252.0,226.8 L255.0,226.6 L258.0,226.5 L261.0,226.4 L264.0,226.2 L267.0,226.1 L270.0,226.1 L273.0,226.0 L276.0,226.0 L279.0,226.0 L282.0,226.1 L285.0,226.2 L288.0,226.3 L291.0,226.4 L294.0,226.5 L297.0,226.7 L300.0,226.9 L303.0,227.1 L306.0,227.3 L309.0,227.4 L312.0,227.6 L315.0,227.9 L318.0,228.1 L321.0,228.4 L324.0,228.7 L327.0,229.1 L330.0,229.4 L333.0,229.7 L336.0,230.1 L339.0,230.4 L342.0,230.7 L345.0,231.1 L348.0,231.4 L351.0,231.8 L354.0,232.1 L357.0,232.5 L360.0,232.9 L363.0,233.2 L366.0,233.6 L369.0,233.9 L372.0,234.2 L375.0,234.5 L378.0,234.8 L381.0,235.1 L384.0,235.4 L387.0,235.6 L390.0,235.9 L393.0,236.2 L396.0,236.4 L399.0,236.6 L402.0,236.8 L405.0,236.9 L408.0,237.0 L411.0,237.0 L414.0,236.9 L417.0,236.8 L420.0,236.7 L423.0,236.5 L426.0,236.3 L429.0,236.1 L432.0,235.8 L435.0,235.5 L438.0,235.0 L441.0,234.5 L444.0,234.0 L447.0,233.5 L450.0,233.0 L453.0,232.5 L456.0,232.1 L459.0,231.6 L462.0,231.1 L465.0,230.7 L468.0,230.4 L471.0,230.1 L474.0,229.9 L477.0,229.6 L480.0,229.4 L483.0,229.2 L486.0,229.1 L489.0,229.0 L492.0,229.0 L495.0,229.1 L498.0,229.2 L501.0,229.3 L504.0,229.5 L507.0,229.7 L510.0,229.9 L513.0,230.1 L516.0,230.3 L519.0,230.5 L522.0,230.7 L525.0,231.0 L528.0,231.3 L531.0,231.6 L534.0,231.9 L537.0,232.2 L540.0,232.5 L543.0,232.8 L546.0,233.2 L549.0,233.5 L552.0,233.9 L555.0,234.3 L558.0,234.7 L561.0,235.1 L564.0,235.6 L567.0,236.1 L570.0,236.6 L573.0,237.2 L576.0,237.8 L579.0,238.6 L582.0,239.6 L585.0,241.2 L585.0,242.8 L582.0,244.4 L579.0,245.4 L576.0,246.2 L573.0,246.8 L570.0,247.4 L567.0,247.9 L564.0,248.4 L561.0,248.9 L558.0,249.3 L555.0,249.7 L552.0,250.1 L549.0,250.5 L546.0,250.8 L543.0,251.2 L540.0,251.5 L537.0,251.8 L534.0,252.1 L531.0,252.4 L528.0,252.7 L525.0,253.0 L522.0,253.3 L519.0,253.5 L516.0,253.7 L513.0,253.9 L510.0,254.1 L507.0,254.3 L504.0,254.5 L501.0,254.7 L498.0,254.8 L495.0,254.9 L492.0,255.0 L489.0,255.0 L486.0,254.9 L483.0,254.8 L480.0,254.6 L477.0,254.4 L474.0,254.1 L471.0,253.9 L468.0,253.6 L465.0,253.3 L462.0,252.9 L459.0,252.4 L456.0,251.9 L453.0,251.5 L450.0,251.0 L447.0,250.5 L444.0,250.0 L441.0,249.5 L438.0,249.0 L435.0,248.5 L432.0,248.2 L429.0,247.9 L426.0,247.7 L423.0,247.5 L420.0,247.3 L417.0,247.2 L414.0,247.1 L411.0,247.0 L408.0,247.0 L405.0,247.1 L402.0,247.2 L399.0,247.4 L396.0,247.6 L393.0,247.8 L390.0,248.1 L387.0,248.4 L384.0,248.6 L381.0,248.9 L378.0,249.2 L375.0,249.5 L372.0,249.8 L369.0,250.1 L366.0,250.4 L363.0,250.8 L360.0,251.1 L357.0,251.5 L354.0,251.9 L351.0,252.2 L348.0,252.6 L345.0,252.9 L342.0,253.3 L339.0,253.6 L336.0,253.9 L333.0,254.3 L330.0,254.6 L327.0,254.9 L324.0,255.3 L321.0,255.6 L318.0,255.9 L315.0,256.1 L312.0,256.4 L309.0,256.6 L306.0,256.7 L303.0,256.9 L300.0,257.1 L297.0,257.3 L294.0,257.5 L291.0,257.6 L288.0,257.7 L285.0,257.8 L282.0,257.9 L279.0,258.0 L276.0,258.0 L273.0,258.0 L270.0,257.9 L267.0,257.9 L264.0,257.8 L261.0,257.6 L258.0,257.5 L255.0,257.4 L252.0,257.2 L249.0,257.0 L246.0,256.8 L243.0,256.7 L240.0,256.5 L237.0,256.3 L234.0,256.1 L231.0,255.9 L228.0,255.7 L225.0,255.4 L222.0,255.2 L219.0,254.9 L216.0,254.6 L213.0,254.3 L210.0,254.0 L207.0,253.7 L204.0,253.4 L201.0,253.1 L198.0,252.8 L195.0,252.4 L192.0,252.1 L189.0,251.7 L186.0,251.3 L183.0,250.9 L180.0,250.5 L177.0,250.0 L174.0,249.6 L171.0,249.2 L168.0,248.7 L165.0,248.2 L162.0,247.7 L159.0,247.2 L156.0,246.6 L153.0,246.0 L150.0,245.3 L147.0,244.4 L144.0,242.8Z" fill="#e8382d"/>
<path d="M144.0,314.9 L147.0,314.8 L150.0,314.7 L153.0,314.5 L156.0,314.4 L159.0,314.3 L162.0,314.2 L165.0,314.0 L168.0,313.9 L171.0,313.8 L174.0,313.7 L177.0,313.6 L180.0,313.4 L183.0,313.3 L186.0,313.2 L189.0,313.1 L192.0,313.0 L195.0,312.8 L198.0,312.7 L201.0,312.6 L204.0,312.5 L207.0,312.3 L210.0,312.2 L213.0,312.1 L216.0,312.0 L219.0,311.8 L222.0,311.7 L225.0,311.6 L228.0,311.5 L231.0,311.3 L234.0,311.2 L237.0,311.1 L240.0,310.9 L243.0,310.8 L246.0,310.7 L249.0,310.5 L252.0,310.4 L255.0,310.3 L258.0,310.1 L261.0,310.0 L264.0,309.8 L267.0,309.7 L270.0,309.6 L273.0,309.4 L276.0,309.3 L279.0,309.1 L282.0,309.0 L285.0,308.8 L288.0,308.7 L291.0,308.5 L294.0,308.4 L297.0,308.2 L300.0,308.1 L303.0,307.9 L306.0,307.8 L309.0,307.6 L312.0,307.5 L315.0,307.3 L318.0,307.1 L321.0,307.0 L324.0,306.8 L327.0,306.7 L330.0,306.5 L333.0,306.4 L336.0,306.2 L339.0,306.1 L342.0,305.9 L345.0,305.8 L348.0,305.6 L351.0,305.4 L354.0,305.3 L357.0,305.1 L360.0,305.0 L363.0,304.8 L366.0,304.6 L369.0,304.5 L372.0,304.3 L375.0,304.1 L378.0,304.0 L381.0,303.8 L384.0,303.6 L387.0,303.5 L390.0,303.3 L393.0,303.2 L396.0,303.0 L399.0,302.8 L402.0,302.7 L405.0,302.6 L408.0,302.4 L411.0,302.3 L414.0,302.1 L417.0,302.0 L420.0,301.9 L423.0,301.8 L426.0,301.7 L429.0,301.5 L432.0,301.4 L435.0,301.3 L438.0,301.2 L441.0,301.1 L444.0,301.0 L447.0,301.0 L450.0,300.9 L453.0,300.9 L456.0,300.9 L459.0,300.9 L462.0,301.0 L465.0,301.0 L468.0,301.1 L471.0,301.2 L474.0,301.3 L477.0,301.4 L480.0,301.5 L483.0,301.6 L486.0,301.7 L489.0,301.9 L492.0,302.0 L495.0,302.2 L498.0,302.4 L501.0,302.6 L504.0,302.9 L507.0,303.2 L510.0,303.5 L513.0,303.8 L516.0,304.1 L519.0,304.4 L522.0,304.7 L525.0,305.0 L528.0,305.4 L531.0,305.7 L534.0,306.1 L537.0,306.5 L540.0,306.8 L543.0,307.2 L546.0,307.6 L549.0,308.0 L552.0,308.5 L555.0,308.9 L558.0,309.4 L561.0,309.9 L564.0,310.4 L567.0,311.0 L570.0,311.6 L573.0,312.3 L576.0,312.9 L579.0,313.6 L582.0,314.4 L585.0,315.7 L585.0,317.3 L582.0,318.6 L579.0,319.4 L576.0,320.1 L573.0,320.7 L570.0,321.4 L567.0,322.0 L564.0,322.6 L561.0,323.1 L558.0,323.6 L555.0,324.1 L552.0,324.5 L549.0,325.0 L546.0,325.4 L543.0,325.8 L540.0,326.2 L537.0,326.5 L534.0,326.9 L531.0,327.3 L528.0,327.6 L525.0,328.0 L522.0,328.3 L519.0,328.6 L516.0,328.9 L513.0,329.2 L510.0,329.5 L507.0,329.8 L504.0,330.1 L501.0,330.4 L498.0,330.6 L495.0,330.8 L492.0,331.0 L489.0,331.1 L486.0,331.3 L483.0,331.4 L480.0,331.5 L477.0,331.6 L474.0,331.7 L471.0,331.8 L468.0,331.9 L465.0,332.0 L462.0,332.0 L459.0,332.1 L456.0,332.1 L453.0,332.1 L450.0,332.1 L447.0,332.0 L444.0,332.0 L441.0,331.9 L438.0,331.8 L435.0,331.7 L432.0,331.6 L429.0,331.5 L426.0,331.3 L423.0,331.2 L420.0,331.1 L417.0,331.0 L414.0,330.9 L411.0,330.7 L408.0,330.6 L405.0,330.4 L402.0,330.3 L399.0,330.2 L396.0,330.0 L393.0,329.8 L390.0,329.7 L387.0,329.5 L384.0,329.4 L381.0,329.2 L378.0,329.0 L375.0,328.9 L372.0,328.7 L369.0,328.5 L366.0,328.4 L363.0,328.2 L360.0,328.0 L357.0,327.9 L354.0,327.7 L351.0,327.6 L348.0,327.4 L345.0,327.2 L342.0,327.1 L339.0,326.9 L336.0,326.8 L333.0,326.6 L330.0,326.5 L327.0,326.3 L324.0,326.2 L321.0,326.0 L318.0,325.9 L315.0,325.7 L312.0,325.5 L309.0,325.4 L306.0,325.2 L303.0,325.1 L300.0,324.9 L297.0,324.8 L294.0,324.6 L291.0,324.5 L288.0,324.3 L285.0,324.2 L282.0,324.0 L279.0,323.9 L276.0,323.7 L273.0,323.6 L270.0,323.4 L267.0,323.3 L264.0,323.2 L261.0,323.0 L258.0,322.9 L255.0,322.7 L252.0,322.6 L249.0,322.5 L246.0,322.3 L243.0,322.2 L240.0,322.1 L237.0,321.9 L234.0,321.8 L231.0,321.7 L228.0,321.5 L225.0,321.4 L222.0,321.3 L219.0,321.2 L216.0,321.0 L213.0,320.9 L210.0,320.8 L207.0,320.7 L204.0,320.5 L201.0,320.4 L198.0,320.3 L195.0,320.2 L192.0,320.0 L189.0,319.9 L186.0,319.8 L183.0,319.7 L180.0,319.6 L177.0,319.4 L174.0,319.3 L171.0,319.2 L168.0,319.1 L165.0,319.0 L162.0,318.8 L159.0,318.7 L156.0,318.6 L153.0,318.5 L150.0,318.3 L147.0,318.2 L144.0,318.1Z" fill="#e99127"/>
<path d="M144,404 L144,400.5 C230,382 300,375.5 366,375.5 C440,375.5 520,386 585,400.5 L585,404 Z" fill="#0d6cb8"/>
<path d="M139,524 C139,500 158,484 184,484 C230,484 290,512 341,511 C390,510 420,480 460,480 C500,480 560,498 585,510 C592,514 595,518 595,524 C595,540 560,564 497,564 C470,564 455,541 420,538 C390,536 365,540 341,543 C300,550 260,566 222,566 C180,566 139,550 139,524 Z" fill="#0d6cb8"/>
<g fill="#0d6cb8"><rect x="717" y="185" width="6" height="366"/><circle cx="720" cy="551" r="8"/><path d="M720,164.5 L732,192 L720,186 L708,192 Z"/></g>
<path d="M802,164.5 L821.5,208 L807,201.5 L802.8,559 L801.6,559 L797,201.5 L784,208 Z" fill="#8d4f86"/>
<path d="M908.9,245.2 L904.9,245.2 L900.8,245.3 L896.6,245.3 L892.5,245.4 L888.3,245.7 L884.4,246.2 L880.6,247.0 L876.9,247.9 L873.3,249.0 L869.8,250.3 L866.6,252.0 L863.6,254.0 L861.0,256.5 L858.7,259.2 L856.8,262.3 L855.2,265.5 L854.1,269.0 L853.7,272.5 L854.1,276.1 L855.2,279.7 L856.7,283.2 L858.6,286.6 L861.0,289.7 L863.6,292.3 L866.6,294.4 L870.0,296.0 L873.5,297.3 L877.1,298.2 L880.7,298.9 L884.4,299.6 L888.2,300.2 L892.1,300.5 L896.1,300.8 L900.2,300.9 L904.4,301.0 L908.9,301.1 L913.8,301.2 L919.0,301.3 L924.4,301.3 L929.8,301.3 L935.0,301.4 L939.9,301.5 L944.7,301.6 L949.4,301.7 L953.9,301.7 L957.9,302.0 L961.2,302.4 L963.6,303.2 L965.2,304.1 L966.3,305.2 L967.1,306.7 L967.8,308.5 L968.3,310.5 L968.6,312.4 L968.8,314.3 L968.7,316.2 L968.3,318.4 L967.7,320.6 L967.1,322.8 L966.3,324.9 L965.6,326.9 L964.9,328.8 L964.1,330.5 L963.3,332.0 L962.3,333.2 L961.0,334.3 L959.4,335.4 L957.4,336.3 L955.0,337.2 L952.4,337.9 L949.5,338.6 L946.4,339.3 L943.2,339.9 L939.9,340.3 L936.4,340.6 L932.5,340.9 L928.2,341.3 L923.6,341.9 L918.4,342.6 L912.5,343.3 L906.3,344.2 L900.1,345.1 L894.3,346.1 L889.4,347.0 L885.2,348.0 L881.7,349.0 L878.5,350.0 L875.7,351.1 L873.2,352.2 L870.7,353.3 L868.4,354.5 L866.3,355.7 L864.4,356.9 L862.7,358.2 L861.2,359.6 L859.8,361.1 L858.6,362.7 L857.5,364.4 L856.8,366.2 L856.2,367.9 L855.8,369.6 L855.6,371.3 L855.6,373.0 L855.9,374.7 L856.3,376.3 L856.9,377.9 L857.8,379.4 L858.8,380.8 L859.9,382.1 L861.3,383.4 L862.8,384.5 L864.4,385.6 L866.0,386.6 L867.7,387.5 L869.3,388.3 L871.0,389.1 L872.8,389.8 L874.7,390.4 L876.9,391.0 L879.3,391.7 L882.2,392.4 L885.3,393.0 L888.7,393.7 L892.2,394.3 L895.8,395.0 L899.5,395.7 L903.4,396.4 L907.5,397.1 L911.8,397.9 L916.0,398.7 L919.9,399.4 L923.5,400.1 L926.8,400.6 L929.8,401.1 L932.5,401.5 L935.0,401.9 L937.2,402.3 L939.2,402.9 L941.0,403.6 L942.6,404.4 L944.1,405.2 L945.3,406.0 L946.3,406.9 L947.1,407.6 L947.6,408.3 L947.9,408.8 L948.0,409.4 L948.1,410.1 L948.1,410.9 L948.0,411.8 L948.0,412.6 L947.8,413.4 L947.7,414.0 L947.4,414.5 L947.1,415.0 L946.5,415.6 L945.6,416.2 L944.3,416.8 L942.8,417.5 L941.1,418.1 L939.3,418.7 L937.4,419.2 L935.6,419.6 L933.6,419.9 L931.6,420.2 L929.3,420.5 L926.7,420.8 L923.7,421.2 L920.3,421.6 L916.4,422.1 L912.3,422.6 L908.0,423.1 L903.7,423.7 L899.7,424.3 L895.6,425.0 L891.5,425.7 L887.5,426.5 L883.5,427.3 L879.8,428.1 L876.4,428.9 L873.4,429.8 L870.7,430.8 L868.2,431.8 L866.0,432.7 L863.9,433.7 L862.1,434.7 L860.3,435.6 L858.7,436.6 L857.3,437.6 L856.0,438.6 L854.9,439.6 L853.9,440.7 L853.1,441.9 L852.4,443.1 L851.9,444.3 L851.6,445.6 L851.5,446.9 L851.5,448.2 L851.8,449.6 L852.2,450.9 L852.8,452.2 L853.6,453.5 L854.5,454.7 L855.7,455.9 L857.0,457.0 L858.5,458.1 L860.1,459.0 L861.7,460.0 L863.4,460.9 L865.2,461.7 L866.8,462.5 L868.4,463.2 L870.1,463.9 L871.9,464.6 L874.0,465.4 L876.4,466.2 L879.3,467.2 L882.5,468.2 L886.0,469.3 L889.6,470.4 L893.1,471.5 L896.4,472.7 L899.6,473.8 L902.8,475.0 L906.0,476.3 L909.0,477.5 L911.9,478.6 L914.4,479.6 L916.6,480.3 L918.6,481.0 L920.3,481.5 L921.8,482.0 L923.1,482.5 L924.3,483.0 L925.4,483.5 L926.4,484.0 L927.2,484.6 L927.8,485.1 L928.4,485.6 L928.8,486.0 L929.0,486.4 L929.2,486.6 L929.2,486.8 L929.2,486.9 L929.2,487.1 L929.1,487.3 L928.9,487.6 L928.6,488.0 L928.3,488.4 L927.8,488.8 L927.2,489.2 L926.4,489.6 L925.3,490.0 L924.1,490.4 L922.7,490.9 L921.1,491.3 L919.5,491.7 L917.7,492.0 L915.9,492.3 L913.9,492.6 L911.7,492.8 L909.5,493.0 L907.2,493.3 L904.8,493.6 L902.4,493.9 L899.9,494.2 L897.3,494.5 L894.7,494.9 L892.2,495.3 L889.8,495.7 L887.4,496.0 L885.1,496.4 L882.7,496.8 L880.5,497.3 L878.5,497.7 L876.6,498.3 L875.0,498.8 L873.7,499.4 L872.5,500.0 L871.4,500.7 L870.5,501.3 L869.7,502.1 L868.9,502.8 L868.2,503.7 L867.6,504.6 L867.1,505.5 L866.8,506.4 L866.6,507.3 L866.5,508.3 L866.7,509.2 L866.9,510.1 L867.4,510.9 L868.0,511.7 L868.7,512.4 L869.6,513.1 L870.6,513.6 L871.7,514.2 L872.9,514.7 L874.2,515.1 L875.6,515.6 L877.2,516.1 L878.9,516.6 L880.8,517.1 L882.7,517.6 L884.7,518.1 L886.7,518.6 L888.8,519.1 L891.1,519.6 L893.3,520.0 L895.6,520.5 L897.7,521.0 L899.7,521.5 L901.6,522.1 L903.4,522.6 L905.1,523.2 L906.8,523.8 L908.3,524.4 L909.6,524.9 L910.9,525.4 L911.9,525.8 L912.9,526.2 L913.7,526.5 L914.3,526.9 L914.9,527.3 L915.4,527.7 L915.8,528.1 L916.1,528.5 L916.3,528.8 L916.5,529.2 L916.5,529.6 L916.6,530.0 L916.5,530.4 L916.4,530.8 L916.1,531.3 L915.8,531.8 L915.3,532.3 L914.7,532.9 L913.9,533.5 L913.0,534.2 L912.0,534.8 L910.8,535.5 L909.6,536.2 L908.2,536.9 L906.7,537.7 L905.1,538.4 L903.4,539.2 L901.6,540.0 L899.7,540.7 L897.7,541.5 L895.6,542.2 L893.5,543.0 L891.2,543.8 L889.0,544.5 L886.8,545.3 L884.6,546.0 L882.3,546.7 L880.1,547.3 L877.8,548.0 L875.6,548.7 L873.3,549.3 L873.7,550.7 L876.0,550.0 L878.2,549.4 L880.5,548.7 L882.8,548.1 L885.0,547.4 L887.2,546.7 L889.5,546.0 L891.7,545.3 L894.0,544.5 L896.2,543.8 L898.3,543.0 L900.3,542.3 L902.2,541.5 L904.0,540.8 L905.8,540.0 L907.5,539.3 L909.0,538.5 L910.4,537.8 L911.7,537.1 L912.9,536.4 L914.0,535.7 L915.0,535.0 L915.9,534.3 L916.7,533.7 L917.3,533.0 L917.8,532.3 L918.1,531.5 L918.4,530.8 L918.5,530.1 L918.5,529.4 L918.3,528.7 L918.1,528.0 L917.7,527.4 L917.3,526.8 L916.7,526.2 L916.1,525.7 L915.3,525.2 L914.5,524.8 L913.6,524.4 L912.7,524.0 L911.6,523.5 L910.4,523.1 L909.0,522.5 L907.5,521.9 L905.8,521.3 L904.1,520.7 L902.2,520.1 L900.3,519.5 L898.2,518.9 L896.1,518.4 L893.8,517.9 L891.5,517.4 L889.3,516.9 L887.3,516.4 L885.3,515.9 L883.3,515.4 L881.4,514.9 L879.6,514.4 L877.9,513.9 L876.4,513.4 L875.0,512.9 L873.8,512.4 L872.7,512.0 L871.7,511.5 L870.9,511.0 L870.3,510.6 L869.8,510.1 L869.5,509.6 L869.2,509.1 L869.1,508.6 L869.0,508.2 L869.0,507.7 L869.1,507.1 L869.4,506.5 L869.7,505.9 L870.2,505.2 L870.7,504.6 L871.3,503.9 L872.1,503.4 L872.9,502.8 L873.7,502.2 L874.8,501.7 L876.0,501.2 L877.4,500.7 L879.1,500.3 L881.0,499.9 L883.2,499.5 L885.5,499.1 L887.9,498.7 L890.2,498.3 L892.6,498.0 L895.1,497.7 L897.7,497.3 L900.3,497.0 L902.8,496.7 L905.2,496.4 L907.5,496.2 L909.8,496.0 L912.0,495.7 L914.2,495.5 L916.3,495.3 L918.3,495.0 L920.1,494.6 L921.9,494.2 L923.5,493.8 L925.0,493.4 L926.4,492.9 L927.6,492.4 L928.7,491.9 L929.6,491.3 L930.4,490.7 L931.0,490.0 L931.5,489.4 L931.9,488.7 L932.2,488.0 L932.4,487.1 L932.3,486.3 L932.1,485.5 L931.7,484.7 L931.2,484.0 L930.6,483.3 L929.9,482.6 L929.0,482.0 L928.0,481.3 L926.9,480.7 L925.7,480.0 L924.3,479.4 L922.9,478.9 L921.3,478.4 L919.6,477.9 L917.7,477.2 L915.6,476.4 L913.1,475.5 L910.3,474.3 L907.3,473.1 L904.1,471.8 L900.8,470.6 L897.6,469.3 L894.2,468.2 L890.7,467.0 L887.1,465.9 L883.6,464.8 L880.4,463.7 L877.6,462.8 L875.3,461.9 L873.3,461.1 L871.5,460.4 L869.9,459.8 L868.4,459.1 L866.8,458.3 L865.2,457.4 L863.6,456.6 L862.0,455.7 L860.6,454.8 L859.3,453.9 L858.3,453.1 L857.5,452.2 L856.9,451.3 L856.3,450.4 L855.9,449.5 L855.6,448.6 L855.5,447.8 L855.4,447.0 L855.5,446.3 L855.7,445.6 L856.0,444.8 L856.5,444.1 L857.1,443.3 L857.8,442.5 L858.7,441.7 L859.7,440.9 L860.9,440.0 L862.3,439.2 L863.9,438.3 L865.8,437.4 L867.7,436.5 L869.8,435.6 L872.1,434.7 L874.7,433.9 L877.6,433.1 L880.8,432.3 L884.4,431.5 L888.3,430.7 L892.3,430.0 L896.4,429.3 L900.3,428.7 L904.4,428.1 L908.6,427.6 L912.8,427.1 L917.0,426.7 L920.8,426.2 L924.3,425.8 L927.2,425.5 L929.8,425.2 L932.2,424.9 L934.4,424.6 L936.5,424.3 L938.6,423.8 L940.7,423.3 L942.7,422.7 L944.6,422.0 L946.4,421.2 L948.0,420.4 L949.5,419.4 L950.7,418.3 L951.6,417.0 L952.3,415.7 L952.6,414.5 L952.8,413.3 L953.0,412.2 L953.0,411.1 L953.0,409.9 L952.9,408.6 L952.5,407.1 L951.9,405.7 L950.9,404.4 L949.7,403.2 L948.3,402.0 L946.7,400.9 L945.0,399.9 L943.0,398.9 L940.8,398.1 L938.4,397.4 L936.0,396.9 L933.3,396.4 L930.6,396.0 L927.6,395.5 L924.5,394.9 L920.9,394.3 L916.9,393.5 L912.7,392.7 L908.5,391.9 L904.4,391.1 L900.5,390.3 L896.8,389.6 L893.2,388.9 L889.7,388.3 L886.4,387.6 L883.4,387.0 L880.7,386.3 L878.4,385.7 L876.4,385.1 L874.7,384.5 L873.2,383.9 L871.8,383.2 L870.3,382.5 L868.9,381.7 L867.4,380.8 L866.1,379.9 L865.0,379.0 L864.0,378.1 L863.2,377.2 L862.6,376.3 L862.1,375.4 L861.8,374.5 L861.5,373.6 L861.4,372.6 L861.4,371.7 L861.5,370.6 L861.8,369.5 L862.2,368.3 L862.7,367.1 L863.4,366.0 L864.2,364.9 L865.2,363.8 L866.4,362.8 L867.8,361.8 L869.4,360.7 L871.2,359.7 L873.3,358.7 L875.6,357.7 L877.9,356.7 L880.5,355.7 L883.4,354.8 L886.7,353.9 L890.6,353.0 L895.4,352.1 L901.0,351.2 L907.1,350.4 L913.3,349.5 L919.2,348.8 L924.4,348.1 L928.9,347.6 L933.0,347.3 L936.9,347.0 L940.6,346.7 L944.2,346.3 L947.6,345.7 L950.9,345.0 L954.0,344.3 L957.0,343.4 L959.9,342.4 L962.5,341.2 L965.0,339.7 L967.1,337.8 L968.7,335.7 L970.0,333.6 L971.1,331.4 L971.9,329.2 L972.7,327.1 L973.4,324.9 L974.2,322.4 L974.9,319.8 L975.4,317.0 L975.6,314.2 L975.4,311.6 L974.9,309.1 L974.3,306.5 L973.3,303.8 L971.8,301.1 L969.4,298.7 L966.4,296.8 L962.7,295.7 L958.6,295.1 L954.1,294.8 L949.5,294.7 L944.8,294.6 L940.1,294.5 L935.2,294.3 L929.9,294.2 L924.5,294.2 L919.1,294.1 L913.9,294.0 L909.1,293.9 L904.6,293.8 L900.4,293.6 L896.4,293.5 L892.6,293.3 L889.1,292.9 L885.6,292.4 L882.1,291.7 L878.7,291.0 L875.6,290.2 L872.8,289.2 L870.4,288.0 L868.4,286.7 L866.6,284.8 L864.9,282.5 L863.4,279.9 L862.2,277.2 L861.5,274.6 L861.3,272.5 L861.5,270.5 L862.2,268.3 L863.3,266.0 L864.8,263.7 L866.5,261.7 L868.4,260.0 L870.4,258.5 L872.9,257.3 L875.8,256.2 L878.9,255.3 L882.2,254.4 L885.6,253.8 L889.1,253.3 L892.8,253.1 L896.7,253.0 L900.8,253.0 L905.0,252.9 L909.1,252.8Z" fill="#1dc71d"/>
<line x1="144" y1="164.7" x2="585" y2="164.7" stroke="#3a7c5c" stroke-width="1.4"/>
<g fill="#d8f4ec" stroke="#3c8a66" stroke-width="0.7">
<circle cx="169.5" cy="164.7" r="1.6"/><circle cx="208" cy="164.7" r="1.6"/><circle cx="267.5" cy="164.7" r="1.6"/><circle cx="311.5" cy="164.7" r="1.6"/><circle cx="337.5" cy="164.7" r="1.6"/><circle cx="455" cy="164.7" r="1.6"/><circle cx="496.5" cy="164.7" r="1.6"/><circle cx="144.5" cy="164.7" r="1.6"/><circle cx="585" cy="164.7" r="1.6"/>
</g>
<circle cx="366" cy="164.7" r="2" fill="#5aa0d8" stroke="#3f7fb0" stroke-width="0.6"/>
<g><path d="M408,163.2 L408,171.6 L410,169.9 L411.4,172.8 L412.7,172.2 L411.4,169.4 L413.8,169.2 Z" fill="#f4f4f4" stroke="#1c1c1c" stroke-width="0.8"/><path d="M414.3,174.6 c0.8,-2.4 2,-2.4 2.5,-0.4 c0.5,1.8 1.6,1.8 2.2,-0.6" fill="none" stroke="#2a2a2a" stroke-width="1.1"/></g>
</svg>
<div style="left:428.7px;top:178.2px;width:53px;height:30px;background:#c7c7c7;border:0.5px solid #b4b4b4;"></div><span style="left:432px;top:180.42px;font-size:6.6px;line-height:8.6px;color:#262626;transform-origin:0 0;transform:scaleX(0.954);">Side 1: 3,865 px</span><span style="left:432px;top:189.62px;font-size:6.6px;line-height:8.6px;color:#262626;transform-origin:0 0;transform:scaleX(0.954);">Side 2: 3,865 px</span><span style="left:432px;top:198.82px;font-size:6.6px;line-height:8.6px;color:#262626;transform-origin:0 0;transform:scaleX(1.000);">Width:&nbsp;&nbsp;7,73 px</span><div style="left:909.5px;top:88.5px;width:154px;height:230.3px;background:#535353;border:1px solid #383838;box-shadow:0 0 2.5px rgba(0,0,0,0.45);"></div><div style="left:910px;top:89px;width:153px;height:8.8px;background:#3b3b3b;"></div><svg class="abs" style="left:1043px;top:90px" width="20" height="7"><path d="M5,1 l-2.2,2.5 l2.2,2.5z M8.5,1 l-2.2,2.5 l2.2,2.5z" fill="#c8c8c8"/><path d="M13,1.2 l4.2,4.6 M17.2,1.2 l-4.2,4.6" stroke="#d4d4d4" stroke-width="1.1"/></svg><div style="left:910px;top:97.5px;width:153px;height:11.5px;background:#414141;"></div><div style="left:910px;top:97.5px;width:34.5px;height:11.8px;background:#535353;border-right:1px solid #3a3a3a;"></div><svg class="abs" style="left:911.8px;top:99.5px" width="6" height="9"><path d="M3,0.5 l2,2.5 h-4z M3,8 l2,-2.5 h-4z" fill="#bdbdbd"/></svg><span style="left:918.7px;top:99.68px;font-size:7.3px;line-height:9.3px;color:#ececec;transform-origin:0 0;transform:scaleX(0.937);font-weight:bold;">Stroke</span><svg class="abs" style="left:1050.5px;top:99.5px" width="11" height="8"><path d="M4,1.5 h6 M4,4 h6 M4,6.5 h6" stroke="#c4c4c4" stroke-width="0.9"/><path d="M0.5,1 l2.5,0 l-1.25,2z" fill="#c4c4c4"/></svg><span style="left:928.3px;top:116.13px;font-size:7.2px;line-height:9.2px;color:#dcdcdc;transform-origin:0 0;transform:scaleX(0.906);">Weight:</span><div style="left:954.5px;top:115px;width:8.4px;height:10.8px;background:#434343;border-radius:1px;"></div><div style="left:956.5px;top:115.4px;border:2.2px solid transparent;border-bottom:2.8px solid #d0d0d0;width:0;height:0"></div><div style="left:956.5px;top:122.8px;border:2.2px solid transparent;border-top:2.8px solid #d0d0d0;width:0;height:0"></div><div style="left:964.7px;top:115px;width:34.3px;height:10.8px;background:#b0b0b0;border:1px solid #3e3e3e;"><span style="left:2.2px;top:0.17px;font-size:6.9px;line-height:8.9px;color:#262626;transform-origin:0 0;transform:scaleX(0.997);">104,004 p</span></div><div style="left:999.5px;top:115px;width:9.3px;height:10.8px;background:#686868;border:1px solid #454545;"><div style="left:1.15px;top:2.8px;border:2.5px solid transparent;border-top:3px solid #e4e4e4;width:0;height:0"></div></div><span style="left:937px;top:133.53px;font-size:7.2px;line-height:9.2px;color:#dcdcdc;transform-origin:0 0;transform:scaleX(0.874);">Cap:</span><div style="left:954.3px;top:132.2px;width:15.3px;height:11.2px;background:#3b3b3b;border:1px solid #2c2c2c;"><svg class="abs" style="left:-1px;top:-1px" width="15.3" height="11.2" viewBox="0 0 15 11.5"><rect x="6" y="2.5" width="3" height="7" fill="#dadada"/><path d="M4,2.5 h7 M4,9.5 h7" stroke="#dadada" stroke-width="0.8"/></svg></div><div style="left:969.6px;top:132.2px;width:15.3px;height:11.2px;background:#6a6a6a;border:1px solid #474747;"><svg class="abs" style="left:-1px;top:-1px" width="15.3" height="11.2" viewBox="0 0 15 11.5"><path d="M12,3 H7 a3,3 0 0 0 0,6 H12Z" fill="#dadada"/><path d="M7,6 h5" stroke="#444" stroke-width="0.8"/></svg></div><div style="left:984.9px;top:132.2px;width:15.3px;height:11.2px;background:#6a6a6a;border:1px solid #474747;"><svg class="abs" style="left:-1px;top:-1px" width="15.3" height="11.2" viewBox="0 0 15 11.5"><rect x="4" y="3" width="8" height="6" fill="#dadada"/><path d="M7,6 h5" stroke="#444" stroke-width="0.8"/></svg></div><span style="left:928.3px;top:150.83px;font-size:7.2px;line-height:9.2px;color:#dcdcdc;transform-origin:0 0;transform:scaleX(0.916);">Corner:</span><div style="left:954.3px;top:149.7px;width:15.3px;height:11.2px;background:#3b3b3b;border:1px solid #2c2c2c;"><svg class="abs" style="left:-1px;top:-1px" width="15.3" height="11.2" viewBox="0 0 15 11.5"><path d="M4,9.5 V2.5 H11 V5.5 H7 V9.5Z" fill="#dadada"/><path d="M5.5,9.5 V4 H11" stroke="#333" fill="none" stroke-width="0.7"/></svg></div><div style="left:969.6px;top:149.7px;width:15.3px;height:11.2px;background:#6a6a6a;border:1px solid #474747;"><svg class="abs" style="left:-1px;top:-1px" width="15.3" height="11.2" viewBox="0 0 15 11.5"><path d="M4,9.5 V5.5 a3,3 0 0 1 3,-3 H11 V5.5 H7 V9.5Z" fill="#dadada"/><path d="M5.5,9.5 V4 H11" stroke="#444" fill="none" stroke-width="0.7"/></svg></div><div style="left:984.9px;top:149.7px;width:15.3px;height:11.2px;background:#6a6a6a;border:1px solid #474747;"><svg class="abs" style="left:-1px;top:-1px" width="15.3" height="11.2" viewBox="0 0 15 11.5"><path d="M4,9.5 V5 L6.5,2.5 H11 V5.5 H7 V9.5Z" fill="#dadada"/><path d="M5.5,9.5 V4 H11" stroke="#444" fill="none" stroke-width="0.7"/></svg></div><span style="left:1011.7px;top:150.83px;font-size:7.2px;line-height:9.2px;color:#d4d4d4;transform-origin:0 0;transform:scaleX(0.831);">Limit:</span><div style="left:1030.8px;top:149.3px;width:23px;height:10.8px;background:#a2a2a2;border:1px solid #3e3e3e;"><span style="left:2.2px;top:0.17px;font-size:6.9px;line-height:8.9px;color:#262626;transform-origin:0 0;transform:scaleX(1.000);">4</span></div><span style="left:1057.5px;top:151.23px;font-size:7px;line-height:9px;color:#c8c8c8;transform-origin:0 0;transform:scaleX(0.857);">x</span><span style="left:913.7px;top:167.83px;font-size:7.2px;line-height:9.2px;color:#dcdcdc;transform-origin:0 0;transform:scaleX(0.897);">Align Stroke:</span><div style="left:954.3px;top:167.2px;width:15.3px;height:10.8px;background:#3b3b3b;border:1px solid #2c2c2c;"><svg class="abs" style="left:-1px;top:-1px" width="15.3" height="11.2" viewBox="0 0 15 11.5"><path d="M5,2.5 V9 H11" stroke="#dadada" fill="none" stroke-width="1.1"/><path d="M5,6 H11" stroke="#dadada" stroke-width="0.6"/></svg></div><div style="left:969.6px;top:167.2px;width:15.3px;height:10.8px;background:#626262;border:1px solid #474747;"><svg class="abs" style="left:-1px;top:-1px" width="15.3" height="11.2" viewBox="0 0 15 11.5"><path d="M6,3 V8.5 H10" stroke="#7c7c7c" fill="none" stroke-width="1"/></svg></div><div style="left:984.9px;top:167.2px;width:15.3px;height:10.8px;background:#626262;border:1px solid #474747;"><svg class="abs" style="left:-1px;top:-1px" width="15.3" height="11.2" viewBox="0 0 15 11.5"><path d="M6,3 V8.5 H10" stroke="#7c7c7c" fill="none" stroke-width="1"/></svg></div><div style="left:912px;top:183.7px;width:149px;height:0.8px;background:#4a4a4a;"></div><div style="left:915px;top:191.7px;width:6px;height:6px;background:#606060;border:1px solid #494949;"></div><span style="left:924.7px;top:190.03px;font-size:7.2px;line-height:9.2px;color:#dcdcdc;transform-origin:0 0;transform:scaleX(0.905);">Dashed Line</span><div style="left:1009px;top:189.2px;width:24px;height:11.2px;background:#5a5a5a;border:1px solid #4a4a4a;"><div style="left:4px;top:2.6px;width:14px;height:4.4px;border:1px dashed #6e6e6e"></div></div><div style="left:1035.6px;top:189.2px;width:24px;height:11.2px;background:#5a5a5a;border:1px solid #4a4a4a;"><div style="left:4px;top:2.6px;width:14px;height:4.4px;border:1px dashed #6e6e6e"></div></div><div style="left:914.5px;top:207px;width:22.2px;height:10.6px;background:#707070;border:1px solid #5c5c5c;"></div><span style="left:918.227px;top:220.32px;font-size:6.8px;line-height:8.8px;color:#7c7c7c;transform-origin:0 0;transform:scaleX(1.000);">dash</span><div style="left:939.16px;top:207px;width:22.2px;height:10.6px;background:#707070;border:1px solid #5c5c5c;"></div><span style="left:944.587px;top:220.32px;font-size:6.8px;line-height:8.8px;color:#7c7c7c;transform-origin:0 0;transform:scaleX(1.000);">gap</span><div style="left:963.82px;top:207px;width:22.2px;height:10.6px;background:#707070;border:1px solid #5c5c5c;"></div><span style="left:967.547px;top:220.32px;font-size:6.8px;line-height:8.8px;color:#7c7c7c;transform-origin:0 0;transform:scaleX(1.000);">dash</span><div style="left:988.48px;top:207px;width:22.2px;height:10.6px;background:#707070;border:1px solid #5c5c5c;"></div><span style="left:993.907px;top:220.32px;font-size:6.8px;line-height:8.8px;color:#7c7c7c;transform-origin:0 0;transform:scaleX(1.000);">gap</span><div style="left:1013.14px;top:207px;width:22.2px;height:10.6px;background:#707070;border:1px solid #5c5c5c;"></div><span style="left:1016.87px;top:220.32px;font-size:6.8px;line-height:8.8px;color:#7c7c7c;transform-origin:0 0;transform:scaleX(1.000);">dash</span><div style="left:1037.8px;top:207px;width:22.2px;height:10.6px;background:#707070;border:1px solid #5c5c5c;"></div><span style="left:1043.23px;top:220.32px;font-size:6.8px;line-height:8.8px;color:#7c7c7c;transform-origin:0 0;transform:scaleX(1.000);">gap</span><div style="left:912px;top:231.5px;width:149px;height:0.8px;background:#4a4a4a;"></div><span style="left:913.3px;top:239.33px;font-size:7.2px;line-height:9.2px;color:#e4e4e4;transform-origin:0 0;transform:scaleX(0.933);">Arrowheads:</span><div style="left:955px;top:238.4px;width:23.5px;height:10.8px;background:#e4e4e4;border:1px solid #444;"><div style="left:3.5px;top:4px;width:15px;height:1.3px;background:#111;"></div></div><div style="left:978.5px;top:238.4px;width:11px;height:10.8px;background:#686868;border:1px solid #454545;"><div style="left:2px;top:2.8px;border:2.5px solid transparent;border-top:3px solid #e4e4e4;width:0;height:0"></div></div><div style="left:998px;top:238.4px;width:23.3px;height:10.8px;background:#e4e4e4;border:1px solid #444;"><div style="left:3.5px;top:4px;width:15px;height:1.3px;background:#111;"></div></div><div style="left:1021.3px;top:238.4px;width:10.5px;height:10.8px;background:#686868;border:1px solid #454545;"><div style="left:1.75px;top:2.8px;border:2.5px solid transparent;border-top:3px solid #e4e4e4;width:0;height:0"></div></div><svg class="abs" style="left:1046.5px;top:238.5px" width="12" height="10"><path d="M2,3 h7 M9,3 l-2,-1.5 M9,3 l-2,1.5 M10,7 h-7 M3,7 l2,-1.5 M3,7 l2,1.5" stroke="#727272" fill="none" stroke-width="0.8"/></svg><span style="left:933.7px;top:259.53px;font-size:7.2px;line-height:9.2px;color:#808080;transform-origin:0 0;transform:scaleX(0.865);">Scale:</span><div style="left:955px;top:258.7px;width:33.5px;height:10.5px;background:#626262;border:1px solid #4c4c4c;"></div><div style="left:957.3px;top:259.4px;border:2.2px solid transparent;border-bottom:2.8px solid #8c8c8c;width:0;height:0"></div><div style="left:957.3px;top:266.8px;border:2.2px solid transparent;border-top:2.8px solid #8c8c8c;width:0;height:0"></div><div style="left:964px;top:258.7px;width:24.5px;height:10.5px;background:#6c6c6c;border:1px solid #4c4c4c;"><span style="left:3px;top:0.22px;font-size:6.6px;line-height:8.6px;color:#888;transform-origin:0 0;transform:scaleX(0.829);">100%</span></div><div style="left:998px;top:258.7px;width:33.5px;height:10.5px;background:#626262;border:1px solid #4c4c4c;"></div><div style="left:1000.3px;top:259.4px;border:2.2px solid transparent;border-bottom:2.8px solid #8c8c8c;width:0;height:0"></div><div style="left:1000.3px;top:266.8px;border:2.2px solid transparent;border-top:2.8px solid #8c8c8c;width:0;height:0"></div><div style="left:1007px;top:258.7px;width:24.5px;height:10.5px;background:#6c6c6c;border:1px solid #4c4c4c;"><span style="left:3px;top:0.22px;font-size:6.6px;line-height:8.6px;color:#888;transform-origin:0 0;transform:scaleX(0.829);">100%</span></div><svg class="abs" style="left:1047px;top:258px" width="10" height="12"><path d="M3,4 v-1 a2,2 0 0 1 4,0 v1 M3,8 v1 a2,2 0 0 0 4,0 v-1" stroke="#6e6e6e" fill="none" stroke-width="0.9"/></svg><span style="left:934.5px;top:279.43px;font-size:7.2px;line-height:9.2px;color:#808080;transform-origin:0 0;transform:scaleX(0.916);">Align:</span><div style="left:955.3px;top:279px;width:14.5px;height:9.6px;background:#626262;border:1px solid #474747;"><svg class="abs" style="left:-1px;top:-1px" width="14.5" height="9.6" viewBox="0 0 15 11.5"><path d="M3,6 h8 M11,3.5 v5" stroke="#7c7c7c" stroke-width="0.9"/></svg></div><div style="left:969.6px;top:279px;width:14.5px;height:9.6px;background:#626262;border:1px solid #474747;"><svg class="abs" style="left:-1px;top:-1px" width="14.5" height="9.6" viewBox="0 0 15 11.5"><path d="M3,6 h8 M8,3.5 v5" stroke="#7c7c7c" stroke-width="0.9"/></svg></div><span style="left:930.7px;top:301.93px;font-size:7.2px;line-height:9.2px;color:#e4e4e4;transform-origin:0 0;transform:scaleX(0.906);">Profile:</span><div style="left:955px;top:301.5px;width:58.2px;height:10.8px;background:#e4e4e4;border:1px solid #444;"></div><svg class="abs" style="left:954.5px;top:301.3px" width="60" height="11" viewBox="0 0 60 11"><path d="M6.5,5.6 C6.5,3 11,3 11,5.6 C11,5.6 12.5,5.5 14.5,5.5 C16,5.5 17.5,3.2 19.5,3.2 C20.5,3.2 21.5,4.3 22.5,4.3 C23.5,4.3 24.5,5.3 25.5,5.4 L35,5.2 C38,5 40,2.8 43.5,2.8 C47.5,2.8 51,4.4 53,5.6 C51,6.8 47.5,8.4 43.5,8.4 C40,8.4 38,6.2 35,6 L25.5,5.8 C24.5,5.9 23.5,6.9 22.5,6.9 C21.5,6.9 20.5,8 19.5,8 C17.5,8 16,5.7 14.5,5.7 C12.5,5.7 11,5.6 11,5.6 C11,8.2 6.5,8.2 6.5,5.6Z" fill="#0a0a0a"/></svg><div style="left:1013.2px;top:301.5px;width:10.3px;height:10.8px;background:#686868;border:1px solid #454545;"><div style="left:1.65px;top:2.8px;border:2.5px solid transparent;border-top:3px solid #e4e4e4;width:0;height:0"></div></div><svg class="abs" style="left:1031px;top:301px" width="30" height="12"><path d="M2,3 l3.5,3 l-3.5,3z M10,3 l-3.5,3 l3.5,3z" fill="#a4a4a4"/><path d="M6,1.5 v9" stroke="#a4a4a4" stroke-width="0.7"/><path d="M19,2.5 h6 M19,9.5 h6 M22,1 v10" stroke="#6a6a6a" stroke-width="0.8" stroke-dasharray="1.5 1"/></svg><div style="left:1100px;top:44px;width:180px;height:676px;background:#4c4c4c;"></div><div style="left:1100px;top:44px;width:180px;height:6.4px;background:#3a3a3a;"></div><svg class="abs" style="left:1114px;top:44.3px" width="10" height="6"><path d="M4,0.8 l-2,2.2 l2,2.2z M7.5,0.8 l-2,2.2 l2,2.2z" fill="#bdbdbd"/></svg><svg class="abs" style="left:1268px;top:44.3px" width="10" height="6"><path d="M2,0.8 l2,2.2 l-2,2.2z M5.5,0.8 l2,2.2 l-2,2.2z" fill="#bdbdbd"/></svg><div style="left:1100px;top:50.4px;width:24.5px;height:111.5px;background:#4f4f4f;border-bottom:1px solid #424242;"></div><div style="left:1105px;top:53.6px;width:14.5px;height:1.4px;background:#3c3c3c;"></div><div style="left:1100px;top:116px;width:24.5px;height:1px;background:#414141;"></div><div style="left:1105px;top:119.3px;width:14.5px;height:1.4px;background:#3c3c3c;"></div><svg class="abs" style="left:1104px;top:58.8px" width="15.3" height="14.4" viewBox="0 0 18 17"><path d="M9,1 v7 M5.5,3 v3 a1.5,1.5 0 0 0 3,1 M12.5,3 v3 a1.5,1.5 0 0 1 -3,1" stroke="#a2a2a2" fill="none" stroke-width="1.1"/><rect x="6.5" y="9" width="5" height="6.5" rx="1" fill="#a2a2a2"/></svg><svg class="abs" style="left:1104px;top:78.1px" width="15.3" height="14.4" viewBox="0 0 18 17"><circle cx="9" cy="5" r="3.1" fill="#a2a2a2"/><circle cx="5.5" cy="10" r="3.1" fill="#a2a2a2"/><circle cx="12.5" cy="10" r="3.1" fill="#a2a2a2"/><rect x="8" y="9" width="2" height="6.5" fill="#a2a2a2"/></svg><svg class="abs" style="left:1104px;top:97.5px" width="15.3" height="14.4" viewBox="0 0 18 17"><rect x="5.5" y="2.5" width="10" height="8" fill="none" stroke="#a2a2a2" stroke-width="1.2" stroke-dasharray="2 1"/><rect x="2.5" y="8.5" width="7" height="6" rx="1.5" fill="#4f4f4f" stroke="#a2a2a2" stroke-width="1.2"/></svg><svg class="abs" style="left:1104px;top:123.2px" width="15.3" height="14.4" viewBox="0 0 18 17"><path d="M9,2 l6.5,3.4 l-6.5,3.4 l-6.5,-3.4z" fill="#a2a2a2"/><path d="M2.5,8.7 l6.5,3.4 l6.5,-3.4 M2.5,11.9 l6.5,3.4 l6.5,-3.4" fill="none" stroke="#a2a2a2" stroke-width="1.4"/></svg><svg class="abs" style="left:1104px;top:143.3px" width="15.3" height="14.4" viewBox="0 0 18 17"><rect x="2.5" y="2.5" width="9.5" height="9.5" fill="none" stroke="#a2a2a2" stroke-width="1.2"/><rect x="6.5" y="6.5" width="9.5" height="9.5" fill="none" stroke="#a2a2a2" stroke-width="1.2"/></svg><div style="left:1124.3px;top:50.4px;width:2.4px;height:670px;background:#444;"></div><div style="left:1127px;top:50.4px;width:153px;height:211px;background:#535353;"></div><div style="left:1127px;top:50.8px;width:153px;height:11.6px;background:#404040;"></div><div style="left:1127px;top:50.8px;width:45px;height:12px;background:#535353;border-right:1px solid #383838;"></div><span style="left:1131px;top:52.68px;font-size:7.3px;line-height:9.3px;color:#ececec;transform-origin:0 0;transform:scaleX(0.861);font-weight:bold;">Appearance</span><svg class="abs" style="left:1266px;top:53px" width="11" height="8"><path d="M4,1.5 h6 M4,4 h6 M4,6.5 h6" stroke="#c4c4c4" stroke-width="0.9"/><path d="M0.5,1 l2.5,0 l-1.25,2z" fill="#c4c4c4"/></svg><div style="left:1129.2px;top:62.5px;width:146.8px;height:185.5px;background:#535353;border:1px solid #474747;border-top:none;"></div><div style="left:1131.8px;top:69px;width:12.4px;height:12px;background:#f6f6f6;border:0.5px solid #999;"></div><svg class="abs" style="left:1131.8px;top:69px" width="13" height="12"><path d="M2,6 L6,2.8 V4.6 C9.3,4.4 11,6 11,9.4 C9.8,7.8 8.2,7.3 6,7.5 V9.2Z" fill="#0a0a0a"/></svg><span style="left:1161.6px;top:70.48px;font-size:7.3px;line-height:9.3px;color:#ececec;transform-origin:0 0;transform:scaleX(0.973);font-weight:bold;">Path</span><div style="left:1130px;top:83.3px;width:145px;height:0.8px;background:#464646;"></div><div style="left:1146px;top:84px;width:0.9px;height:83.5px;background:#484848;"></div><svg class="abs" style="left:1132.8px;top:88.6px" width="10" height="7"><ellipse cx="5" cy="3.5" rx="3.9" ry="2.4" fill="none" stroke="#b4b4b4" stroke-width="0.9"/><circle cx="5" cy="3.5" r="1.1" fill="#b4b4b4"/></svg><div style="left:1149.2px;top:91px;border:2.8px solid transparent;border-top:3.4px solid #e4e4e4;width:0;height:0"></div><span style="left:1161.6px;top:87.73px;font-size:7.2px;line-height:9.2px;color:#d98a2c;transform-origin:0 0;transform:scaleX(0.894);border-bottom:1px dotted #a06a28;height:9.4px;">Stroke:</span><div style="left:1190.4px;top:87px;width:10.8px;height:10px;background:#0a0a0a;border:1px solid #c4c4c4;box-shadow:inset 0 0 0 1px #2a2a2a;"></div><span style="left:1211px;top:87.73px;font-size:7.2px;line-height:9.2px;color:#e4e4e4;transform-origin:0 0;transform:scaleX(0.901);">104,004 pt *</span><div style="left:1130px;top:100.4px;width:145px;height:0.8px;background:#464646;"></div><div style="left:1130px;top:101.2px;width:145px;height:15px;background:#5b5b5b;"></div><div style="left:1133.5px;top:105.2px;width:7px;height:6px;background:transparent;border:1px solid #686868;border-radius:1px;"></div><span style="left:1174.8px;top:104.23px;font-size:7.2px;line-height:9.2px;color:#d98a2c;transform-origin:0 0;transform:scaleX(0.909);border-bottom:1px dotted #a06a28;height:9.4px;">Opacity:</span><span style="left:1202.5px;top:104.23px;font-size:7.2px;line-height:9.2px;color:#ececec;transform-origin:0 0;transform:scaleX(0.921);">Default</span><div style="left:1130px;top:116.4px;width:145px;height:0.8px;background:#464646;"></div><svg class="abs" style="left:1132.8px;top:122px" width="10" height="7"><ellipse cx="5" cy="3.5" rx="3.9" ry="2.4" fill="none" stroke="#b4b4b4" stroke-width="0.9"/><circle cx="5" cy="3.5" r="1.1" fill="#b4b4b4"/></svg><div style="left:1149.2px;top:124.4px;border:2.8px solid transparent;border-top:3.4px solid #e4e4e4;width:0;height:0"></div><span style="left:1161.6px;top:121.03px;font-size:7.2px;line-height:9.2px;color:#b4b4b4;transform-origin:0 0;transform:scaleX(0.813);">Fill:</span><svg class="abs" style="left:1190px;top:120px" width="12" height="12"><rect x="0.5" y="0.5" width="10.8" height="10.4" fill="#f6f2f2" stroke="#a8a8a8"/><path d="M1.5,10.3 L10.3,1.5" stroke="#dd3a30" stroke-width="1.4"/></svg><div style="left:1130px;top:133.6px;width:145px;height:0.8px;background:#464646;"></div><div style="left:1130px;top:134.4px;width:145px;height:14.6px;background:#5b5b5b;"></div><div style="left:1133.5px;top:138.4px;width:7px;height:6px;background:transparent;border:1px solid #686868;border-radius:1px;"></div><span style="left:1174.8px;top:137.53px;font-size:7.2px;line-height:9.2px;color:#d98a2c;transform-origin:0 0;transform:scaleX(0.909);border-bottom:1px dotted #a06a28;height:9.4px;">Opacity:</span><span style="left:1202.5px;top:137.53px;font-size:7.2px;line-height:9.2px;color:#ececec;transform-origin:0 0;transform:scaleX(0.921);">Default</span><div style="left:1130px;top:149.2px;width:145px;height:0.8px;background:#464646;"></div><div style="left:1133.5px;top:155.2px;width:7px;height:6px;background:transparent;border:1px solid #5e5e5e;border-radius:1px;"></div><span style="left:1161.6px;top:154.23px;font-size:7.2px;line-height:9.2px;color:#d98a2c;transform-origin:0 0;transform:scaleX(0.875);border-bottom:1px dotted #a06a28;height:9.4px;">Opacity:</span><span style="left:1189px;top:154.23px;font-size:7.2px;line-height:9.2px;color:#ececec;transform-origin:0 0;transform:scaleX(0.938);">Default</span><div style="left:1130px;top:167.2px;width:145px;height:0.8px;background:#484848;"></div><svg class="abs" style="left:1130px;top:249.3px" width="146" height="12" viewBox="0 0 146 12"><rect x="4.3" y="3" width="6.2" height="6.2" fill="none" stroke="#dedede" stroke-width="1.2"/><rect x="22" y="3.2" width="6" height="5.6" fill="#a4a4a4" stroke="#8a8a8a" stroke-width="0.6"/><path d="M41.5,2.5 C40,2.2 39.6,3.5 39.4,5 L38.6,10.5 M37.8,5.2 H41 M42,5.5 L45,9.2 M45,5.5 L42,9.2 M46.5,9.2 h0.6" stroke="#d8d8d8" stroke-width="0.95" fill="none"/><circle cx="92" cy="6" r="3.1" fill="none" stroke="#c0c0c0" stroke-width="1.1"/><path d="M89.8,3.8 l4.4,4.4" stroke="#c0c0c0" stroke-width="1.1"/><rect x="107.5" y="3" width="5" height="6" fill="#656565"/><rect x="125.5" y="3" width="5" height="6" fill="#606060"/></svg><div style="left:1127px;top:261px;width:153px;height:2.3px;background:#3a3a3a;"></div><div style="left:1127px;top:263.3px;width:153px;height:33px;background:#535353;"></div><div style="left:1127px;top:263.3px;width:153px;height:10.9px;background:#404040;"></div><div style="left:1127px;top:263.3px;width:54px;height:11.3px;background:#535353;border-right:1px solid #383838;"></div><span style="left:1135.3px;top:264.83px;font-size:7.3px;line-height:9.3px;color:#ececec;transform-origin:0 0;transform:scaleX(0.853);font-weight:bold;">Transparency</span><svg class="abs" style="left:1266px;top:265.15px" width="11" height="8"><path d="M4,1.5 h6 M4,4 h6 M4,6.5 h6" stroke="#c4c4c4" stroke-width="0.9"/><path d="M0.5,1 l2.5,0 l-1.25,2z" fill="#c4c4c4"/></svg><svg class="abs" style="left:1129.3px;top:265px" width="6" height="9"><path d="M3,0.5 l2,2.5 h-4z M3,8 l2,-2.5 h-4z" fill="#bdbdbd"/></svg><div style="left:1131.3px;top:280px;width:60.7px;height:10.6px;background:#686868;border:1px solid #424242;"><span style="left:3.4px;top:0.07px;font-size:6.9px;line-height:8.9px;color:#e4e4e4;transform-origin:0 0;transform:scaleX(0.926);">Normal</span><div style="left:52.5px;top:3.2px;border:2.6px solid transparent;border-top:3.2px solid #e4e4e4;width:0;height:0"></div></div><span style="left:1206.7px;top:281.03px;font-size:7px;line-height:9px;color:#dcdcdc;transform-origin:0 0;transform:scaleX(0.919);">Opacity:</span><div style="left:1235px;top:280px;width:29.2px;height:10.8px;background:#b0b0b0;border:1px solid #3e3e3e;"><span style="left:2.2px;top:0.17px;font-size:6.9px;line-height:8.9px;color:#262626;transform-origin:0 0;transform:scaleX(0.867);">100%</span></div><div style="left:1264.8px;top:280px;width:9.6px;height:10.8px;background:#686868;border:1px solid #454545;"><div style="left:1.3px;top:2.8px;border:2.5px solid transparent;border-top:3px solid #e4e4e4;width:0;height:0"></div></div><div style="left:1127px;top:295.8px;width:153px;height:2.2px;background:#3a3a3a;"></div><div style="left:1127px;top:298px;width:153px;height:209px;background:#535353;"></div><div style="left:1127px;top:298px;width:153px;height:11.2px;background:#404040;"></div><div style="left:1152.5px;top:298px;width:51px;height:11.6px;background:#535353;border-right:1px solid #383838;border-left:1px solid #383838;"></div><span style="left:1130.8px;top:299.68px;font-size:7.3px;line-height:9.3px;color:#757575;transform-origin:0 0;transform:scaleX(0.876);font-weight:bold;">Color</span><span style="left:1161.7px;top:299.68px;font-size:7.3px;line-height:9.3px;color:#ececec;transform-origin:0 0;transform:scaleX(0.876);font-weight:bold;">Color Guide</span><svg class="abs" style="left:1266px;top:300px" width="11" height="8"><path d="M4,1.5 h6 M4,4 h6 M4,6.5 h6" stroke="#c4c4c4" stroke-width="0.9"/><path d="M0.5,1 l2.5,0 l-1.25,2z" fill="#c4c4c4"/></svg><svg class="abs" style="left:1155px;top:300px" width="6" height="9"><path d="M3,0.5 l2,2.5 h-4z M3,8 l2,-2.5 h-4z" fill="#bdbdbd"/></svg><div style="left:1129.2px;top:309.2px;width:146.8px;height:184.3px;background:#535353;border:1px solid #474747;border-top:none;"></div><div style="left:1130px;top:315px;width:13px;height:13.3px;background:#080808;border:1px solid #e0e0e0;box-shadow:inset 0 0 0 1px #333;"></div><div style="left:1148.3px;top:315px;width:116px;height:13.3px;background:#d9dbdb;border:1px solid #2c2c2c;"></div><div style="left:1149.3px;top:316px;width:54.5px;height:11.3px;background:linear-gradient(90deg,#c9b89d 0,#c9b89d 20%,#8a846e 24%,#847f68 36%,#74866a 46%,#78886c 56%,#7c9ed6 65%,#7c9ed6 78%,#8c5794 84%,#8c5794 100%);"></div><div style="left:1149.8px;top:316.4px;width:10.6px;height:10.6px;background:#cdbca2;border:1px solid #f4f4f4;"></div><div style="left:1267.3px;top:320.3px;border:2.6px solid transparent;border-top:3.2px solid #bdbdbd;width:0;height:0"></div><span style="left:1144.7px;top:333.88px;font-size:7.3px;line-height:9.3px;color:#e4e4e4;transform-origin:0 0;transform:scaleX(0.897);font-weight:bold;">Shades</span><div style="left:1200.3px;top:337.3px;border:2.2px solid transparent;border-top:2.8px solid #a8a8a8;width:0;height:0"></div><span style="left:1242.5px;top:333.88px;font-size:7.3px;line-height:9.3px;color:#e4e4e4;transform-origin:0 0;transform:scaleX(0.913);font-weight:bold;">Tints</span><div style="left:1129.6px;top:346px;width:146.4px;height:50.6px;background:#161616;"></div><div style="left:1130px;top:346.3px;width:15px;height:10px;background:#121212;"></div><div style="left:1145.5px;top:346.8px;width:16.6px;height:9px;background:#35332d;"></div><div style="left:1163.1px;top:346.8px;width:15.3px;height:9px;background:#6e6a5f;"></div><div style="left:1179.4px;top:346.8px;width:15px;height:9px;background:#a89e8c;"></div><div style="left:1195.4px;top:346.8px;width:14.9px;height:9px;background:#d0c3ad;"></div><div style="left:1211.3px;top:346.8px;width:15.6px;height:9px;background:#d8cdb9;"></div><div style="left:1227.9px;top:346.8px;width:15.1px;height:9px;background:#e0d8c8;"></div><div style="left:1244px;top:346.8px;width:15.9px;height:9px;background:#e7e2d8;"></div><div style="left:1260.9px;top:346.8px;width:14.4px;height:9px;background:#eae8e4;"></div><div style="left:1130px;top:356.3px;width:15px;height:10px;background:#121212;"></div><div style="left:1145.5px;top:356.8px;width:16.6px;height:9px;background:#2c2a25;"></div><div style="left:1163.1px;top:356.8px;width:15.3px;height:9px;background:#5a544a;"></div><div style="left:1179.4px;top:356.8px;width:15px;height:9px;background:#7e7664;"></div><div style="left:1195.4px;top:356.8px;width:14.9px;height:9px;background:#958d78;"></div><div style="left:1211.3px;top:356.8px;width:15.6px;height:9px;background:#aaa28e;"></div><div style="left:1227.9px;top:356.8px;width:15.1px;height:9px;background:#c3bcab;"></div><div style="left:1244px;top:356.8px;width:15.9px;height:9px;background:#d5d0c6;"></div><div style="left:1260.9px;top:356.8px;width:14.4px;height:9px;background:#e4e2dc;"></div><div style="left:1130px;top:366.3px;width:15px;height:10px;background:#121212;"></div><div style="left:1145.5px;top:366.8px;width:16.6px;height:9px;background:#2c3428;"></div><div style="left:1163.1px;top:366.8px;width:15.3px;height:9px;background:#4a5a42;"></div><div style="left:1179.4px;top:366.8px;width:15px;height:9px;background:#5f7a55;"></div><div style="left:1195.4px;top:366.8px;width:14.9px;height:9px;background:#6f9062;"></div><div style="left:1211.3px;top:366.8px;width:15.6px;height:9px;background:#88a57a;"></div><div style="left:1227.9px;top:366.8px;width:15.1px;height:9px;background:#a8bc9c;"></div><div style="left:1244px;top:366.8px;width:15.9px;height:9px;background:#c6d0be;"></div><div style="left:1260.9px;top:366.8px;width:14.4px;height:9px;background:#dfe3da;"></div><div style="left:1130px;top:376.3px;width:15px;height:10px;background:#121212;"></div><div style="left:1145.5px;top:376.8px;width:16.6px;height:9px;background:#2a3040;"></div><div style="left:1163.1px;top:376.8px;width:15.3px;height:9px;background:#4a6490;"></div><div style="left:1179.4px;top:376.8px;width:15px;height:9px;background:#6a8cc8;"></div><div style="left:1195.4px;top:376.8px;width:14.9px;height:9px;background:#82a5e0;"></div><div style="left:1211.3px;top:376.8px;width:15.6px;height:9px;background:#98b4e4;"></div><div style="left:1227.9px;top:376.8px;width:15.1px;height:9px;background:#b4c8ea;"></div><div style="left:1244px;top:376.8px;width:15.9px;height:9px;background:#ccd8ee;"></div><div style="left:1260.9px;top:376.8px;width:14.4px;height:9px;background:#e2e6f0;"></div><div style="left:1130px;top:386.3px;width:15px;height:10px;background:#121212;"></div><div style="left:1145.5px;top:386.8px;width:16.6px;height:9px;background:#2c2030;"></div><div style="left:1163.1px;top:386.8px;width:15.3px;height:9px;background:#5a3560;"></div><div style="left:1179.4px;top:386.8px;width:15px;height:9px;background:#7a4a80;"></div><div style="left:1195.4px;top:386.8px;width:14.9px;height:9px;background:#90589a;"></div><div style="left:1211.3px;top:386.8px;width:15.6px;height:9px;background:#a878aa;"></div><div style="left:1227.9px;top:386.8px;width:15.1px;height:9px;background:#c49ec4;"></div><div style="left:1244px;top:386.8px;width:15.9px;height:9px;background:#dcc6da;"></div><div style="left:1260.9px;top:386.8px;width:14.4px;height:9px;background:#e8e0e8;"></div><svg class="abs" style="left:1131px;top:496.5px" width="146" height="11" viewBox="0 0 146 11"><g stroke="#cfcfcf" stroke-width="0.9" fill="none"><rect x="2.5" y="1.5" width="9" height="6"/><path d="M5.5,1.5 v6 M8.5,1.5 v6 M2.5,4.5 h9 M12.5,9 h3"/></g><circle cx="108" cy="5.2" r="3.6" fill="#8a8a8a" stroke="#a8a8a8" stroke-width="0.7"/><path d="M121,5.5 l3,-2.5 v5z" fill="#d0d0d0"/><rect x="124.5" y="2" width="6" height="6.5" fill="#cfcfcf"/><path d="M126.5,2 v6.5 M128.5,2 v6.5" stroke="#666" stroke-width="0.6"/></svg><span style="left:1150.8px;top:497.47px;font-size:6.9px;line-height:8.9px;color:#dcdcdc;transform-origin:0 0;transform:scaleX(0.909);">None</span><div style="left:1127px;top:506.8px;width:153px;height:2.4px;background:#3a3a3a;"></div><div style="left:1127px;top:509.2px;width:153px;height:211px;background:#535353;"></div><div style="left:1127px;top:510px;width:153px;height:10.8px;background:#404040;"></div><div style="left:1127px;top:510px;width:37.5px;height:11.2px;background:#535353;border-right:1px solid #383838;"></div><span style="left:1130.3px;top:511.48px;font-size:7.3px;line-height:9.3px;color:#ececec;transform-origin:0 0;transform:scaleX(0.873);font-weight:bold;">Swatches</span><svg class="abs" style="left:1266px;top:511.8px" width="11" height="8"><path d="M4,1.5 h6 M4,4 h6 M4,6.5 h6" stroke="#c4c4c4" stroke-width="0.9"/><path d="M0.5,1 l2.5,0 l-1.25,2z" fill="#c4c4c4"/></svg><div style="left:1129.2px;top:520.8px;width:146.8px;height:185.7px;background:#535353;border:1px solid #474747;border-top:none;"></div><svg class="abs" style="left:0;top:0" width="1280" height="720" viewBox="0 0 1280 720"><defs><linearGradient id="sg1"><stop offset="0" stop-color="#ffffff"/><stop offset="1" stop-color="#222222"/></linearGradient><linearGradient id="sg2"><stop offset="0" stop-color="#7ac0e8"/><stop offset="1" stop-color="#1a70b8"/></linearGradient><linearGradient id="sg3"><stop offset="0" stop-color="#f8b8cc"/><stop offset="1" stop-color="#ee88a8"/></linearGradient><radialGradient id="sg4" cx="0.45" cy="0.5" r="0.6"><stop offset="0.1" stop-color="#f8c060"/><stop offset="1" stop-color="#f09030"/></radialGradient><linearGradient id="sg5"><stop offset="0" stop-color="#f0f0f0"/><stop offset="1" stop-color="#dcdcdc"/></linearGradient><pattern id="sg6" width="3" height="9" patternUnits="userSpaceOnUse"><rect width="3" height="9" fill="#b8d4ec"/><rect width="1.5" height="9" fill="#4a8ad0"/></pattern><linearGradient id="sg7"><stop offset="0" stop-color="#e8e8e8"/><stop offset="1" stop-color="#e8c060"/></linearGradient><linearGradient id="sg8"><stop offset="0" stop-color="#f0b040"/><stop offset="1" stop-color="#101010"/></linearGradient><pattern id="sg9" width="3" height="9" patternUnits="userSpaceOnUse"><rect width="3" height="9" fill="#a4a4a4"/><rect width="1.5" height="9" fill="#8a8a8a"/></pattern><pattern id="sg10" width="3" height="9" patternUnits="userSpaceOnUse"><rect width="3" height="9" fill="#b0b0b0"/><rect width="1.5" height="9" fill="#909090"/></pattern><linearGradient id="sg11"><stop offset="0" stop-color="#e8b860"/><stop offset="1" stop-color="#f8ecd0"/></linearGradient><linearGradient id="sg12"><stop offset="0" stop-color="#909090"/><stop offset="1" stop-color="#e0e0e0"/></linearGradient><linearGradient id="sg13"><stop offset="0" stop-color="#f0f0f0"/><stop offset="1" stop-color="#a8a8a8"/></linearGradient><linearGradient id="sg14"><stop offset="0" stop-color="#f0c860"/><stop offset="1" stop-color="#5888b0"/></linearGradient><radialGradient id="sg15" cx="0.45" cy="0.5" r="0.6"><stop offset="0.1" stop-color="#f8e060"/><stop offset="1" stop-color="#e89828"/></radialGradient><linearGradient id="sg16"><stop offset="0" stop-color="#e8a040"/><stop offset="1" stop-color="#f8d888"/></linearGradient><pattern id="sg17" width="3" height="9" patternUnits="userSpaceOnUse"><rect width="3" height="9" fill="#dce4ec"/><rect width="1.5" height="9" fill="#8a9ab0"/></pattern><linearGradient id="sg18"><stop offset="0" stop-color="#d0d0d0"/><stop offset="1" stop-color="#f0f0f0"/></linearGradient><pattern id="sg19" width="3" height="9" patternUnits="userSpaceOnUse"><rect width="3" height="9" fill="#e8e8e8"/><rect width="1.5" height="9" fill="#b8b8b8"/></pattern><pattern id="sg20" width="3" height="9" patternUnits="userSpaceOnUse"><rect width="3" height="9" fill="#e4eef8"/><rect width="1.5" height="9" fill="#78a8d4"/></pattern><linearGradient id="sg21"><stop offset="0" stop-color="#c8c8c8"/><stop offset="1" stop-color="#f4f4f4"/></linearGradient><linearGradient id="sg22"><stop offset="0" stop-color="#f0c050"/><stop offset="1" stop-color="#e89838"/></linearGradient><linearGradient id="sg23"><stop offset="0" stop-color="#58c0e0"/><stop offset="1" stop-color="#e8f4f8"/></linearGradient><linearGradient id="sg24"><stop offset="0" stop-color="#58a8dc"/><stop offset="1" stop-color="#1a70b8"/></linearGradient><linearGradient id="sg25"><stop offset="0" stop-color="#2a78b8"/><stop offset="1" stop-color="#1a5a98"/></linearGradient><linearGradient id="sg26"><stop offset="0" stop-color="#98b4c8"/><stop offset="1" stop-color="#3a84c4"/></linearGradient><linearGradient id="sg27"><stop offset="0" stop-color="#2a84cc"/><stop offset="1" stop-color="#3a98d8"/></linearGradient><linearGradient id="sg28"><stop offset="0" stop-color="#e89850"/><stop offset="1" stop-color="#2a74b4"/></linearGradient><linearGradient id="sg29"><stop offset="0" stop-color="#a4ccdc"/><stop offset="1" stop-color="#c4e0e8"/></linearGradient><linearGradient id="sg30"><stop offset="0" stop-color="#8cc4dc"/><stop offset="1" stop-color="#b4dcea"/></linearGradient></defs><rect x="1130.10" y="526.30" width="8.95" height="8.50" fill="#f6f4f4"/><path d="M1130.60,534.30 L1138.50,526.80" stroke="#dd3a30" stroke-width="1.3"/><rect x="1139.42" y="526.30" width="8.95" height="8.50" fill="#e4e4e4"/><circle cx="1143.92" cy="530.60" r="2.3" fill="none" stroke="#222" stroke-width="0.9"/><path d="M1143.92,526.70 v7.8 M1139.82,530.60 h8.2" stroke="#222" stroke-width="0.8"/><rect x="1148.74" y="526.30" width="8.95" height="8.50" fill="#f8f8f8"/><rect x="1158.06" y="526.30" width="8.95" height="8.50" fill="#0a0a0a"/><rect x="1167.38" y="526.30" width="8.95" height="8.50" fill="#ea2a1e"/><rect x="1176.70" y="526.30" width="8.95" height="8.50" fill="#f4e01e"/><rect x="1186.02" y="526.30" width="8.95" height="8.50" fill="#1eb432"/><rect x="1195.34" y="526.30" width="8.95" height="8.50" fill="#1ec8e8"/><rect x="1204.66" y="526.30" width="8.95" height="8.50" fill="#2222d0"/><rect x="1213.98" y="526.30" width="8.95" height="8.50" fill="#e82ad8"/><rect x="1223.30" y="526.30" width="8.95" height="8.50" fill="#d63c30"/><rect x="1232.62" y="526.30" width="8.95" height="8.50" fill="#e8462e"/><rect x="1241.94" y="526.30" width="8.95" height="8.50" fill="#f0722a"/><rect x="1251.26" y="526.30" width="8.95" height="8.50" fill="#f09624"/><rect x="1130.10" y="535.80" width="8.95" height="8.50" fill="#f0b226"/><rect x="1139.42" y="535.80" width="8.95" height="8.50" fill="#f0da26"/><rect x="1148.74" y="535.80" width="8.95" height="8.50" fill="#c8d02c"/><rect x="1158.06" y="535.80" width="8.95" height="8.50" fill="#7cb83c"/><rect x="1167.38" y="535.80" width="8.95" height="8.50" fill="#2c9c48"/><rect x="1176.70" y="535.80" width="8.95" height="8.50" fill="#0a8a52"/><rect x="1186.02" y="535.80" width="8.95" height="8.50" fill="#14866a"/><rect x="1195.34" y="535.80" width="8.95" height="8.50" fill="#1e9c8a"/><rect x="1204.66" y="535.80" width="8.95" height="8.50" fill="#18a0c4"/><rect x="1213.98" y="535.80" width="8.95" height="8.50" fill="#1a8ad2"/><rect x="1223.30" y="535.80" width="8.95" height="8.50" fill="#1a70c0"/><rect x="1232.62" y="535.80" width="8.95" height="8.50" fill="#3a48a0"/><rect x="1241.94" y="535.80" width="8.95" height="8.50" fill="#2a2a7a"/><rect x="1251.26" y="535.80" width="8.95" height="8.50" fill="#5c3292"/><rect x="1130.10" y="545.00" width="8.95" height="8.50" fill="#8c2c8a"/><rect x="1139.42" y="545.00" width="8.95" height="8.50" fill="#c2227e"/><rect x="1148.74" y="545.00" width="8.95" height="8.50" fill="#d82a68"/><rect x="1158.06" y="545.00" width="8.95" height="8.50" fill="#e23472"/><rect x="1167.38" y="545.00" width="8.95" height="8.50" fill="#c8b29a"/><rect x="1176.70" y="545.00" width="8.95" height="8.50" fill="#9a8a78"/><rect x="1186.02" y="545.00" width="8.95" height="8.50" fill="#807060"/><rect x="1195.34" y="545.00" width="8.95" height="8.50" fill="#6a5a4a"/><rect x="1204.66" y="545.00" width="8.95" height="8.50" fill="#c2925e"/><rect x="1213.98" y="545.00" width="8.95" height="8.50" fill="#a87a48"/><rect x="1223.30" y="545.00" width="8.95" height="8.50" fill="#926232"/><rect x="1232.62" y="545.00" width="8.95" height="8.50" fill="#825228"/><rect x="1241.94" y="545.00" width="8.95" height="8.50" fill="#724220"/><rect x="1251.26" y="545.00" width="8.95" height="8.50" fill="#5a3218"/><rect x="1130.10" y="554.20" width="8.95" height="8.50" fill="url(#sg1)"/><rect x="1139.42" y="554.20" width="8.95" height="8.50" fill="url(#sg2)"/><rect x="1148.74" y="554.20" width="8.95" height="8.50" fill="url(#sg3)"/><rect x="1158.06" y="554.20" width="8.95" height="8.50" fill="url(#sg4)"/><rect x="1167.38" y="554.20" width="8.95" height="8.50" fill="url(#sg5)"/><rect x="1176.70" y="554.20" width="8.95" height="8.50" fill="url(#sg6)"/><rect x="1186.02" y="554.20" width="8.95" height="8.50" fill="url(#sg7)"/><rect x="1195.34" y="554.20" width="8.95" height="8.50" fill="url(#sg8)"/><rect x="1204.66" y="554.20" width="8.95" height="8.50" fill="url(#sg9)"/><rect x="1213.98" y="554.20" width="8.95" height="8.50" fill="url(#sg10)"/><rect x="1223.30" y="554.20" width="8.95" height="8.50" fill="url(#sg11)"/><rect x="1232.62" y="554.20" width="8.95" height="8.50" fill="url(#sg12)"/><rect x="1241.94" y="554.20" width="8.95" height="8.50" fill="url(#sg13)"/><rect x="1251.26" y="554.20" width="8.95" height="8.50" fill="url(#sg14)"/><rect x="1130.10" y="563.70" width="8.95" height="8.50" fill="url(#sg15)"/><rect x="1139.42" y="563.70" width="8.95" height="8.50" fill="url(#sg16)"/><rect x="1148.74" y="563.70" width="8.95" height="8.50" fill="url(#sg17)"/><rect x="1158.06" y="563.70" width="8.95" height="8.50" fill="url(#sg18)"/><rect x="1167.38" y="563.70" width="8.95" height="8.50" fill="url(#sg19)"/><rect x="1176.70" y="563.70" width="8.95" height="8.50" fill="url(#sg20)"/><rect x="1186.02" y="563.70" width="8.95" height="8.50" fill="url(#sg21)"/><rect x="1195.34" y="563.70" width="8.95" height="8.50" fill="url(#sg22)"/><rect x="1204.66" y="563.70" width="8.95" height="8.50" fill="url(#sg23)"/><rect x="1213.98" y="563.70" width="8.95" height="8.50" fill="url(#sg24)"/><rect x="1223.30" y="563.70" width="8.95" height="8.50" fill="url(#sg25)"/><rect x="1232.62" y="563.70" width="8.95" height="8.50" fill="url(#sg26)"/><rect x="1241.94" y="563.70" width="8.95" height="8.50" fill="url(#sg27)"/><rect x="1251.26" y="563.70" width="8.95" height="8.50" fill="url(#sg28)"/><rect x="1130.10" y="573.30" width="8.95" height="8.50" fill="url(#sg29)"/><rect x="1139.42" y="573.30" width="8.95" height="8.50" fill="url(#sg30)"/><rect x="1148.74" y="573.30" width="8.95" height="8.50" fill="#dedede"/><rect x="1158.06" y="573.30" width="8.95" height="8.50" fill="#d8d8d8"/><rect x="1167.38" y="573.30" width="8.95" height="8.50" fill="#e2e2e2"/><rect x="1176.70" y="573.30" width="8.95" height="8.50" fill="#ececec"/><path d="M1130.80,585.80 h3 l1,1 h4 v5 h-8z" fill="#b8b8b8"/><rect x="1139.20" y="583.40" width="8.95" height="8.50" fill="#0c0c0c"/><rect x="1148.52" y="583.40" width="8.95" height="8.50" fill="#262626"/><rect x="1157.84" y="583.40" width="8.95" height="8.50" fill="#3c3c3c"/><rect x="1167.16" y="583.40" width="8.95" height="8.50" fill="#505050"/><rect x="1176.48" y="583.40" width="8.95" height="8.50" fill="#646464"/><rect x="1185.80" y="583.40" width="8.95" height="8.50" fill="#787878"/><rect x="1195.12" y="583.40" width="8.95" height="8.50" fill="#8e8e8e"/><rect x="1204.44" y="583.40" width="8.95" height="8.50" fill="#a4a4a4"/><rect x="1213.76" y="583.40" width="8.95" height="8.50" fill="#bababa"/><rect x="1223.08" y="583.40" width="8.95" height="8.50" fill="#d0d0d0"/><rect x="1232.40" y="583.40" width="8.95" height="8.50" fill="#e6e6e6"/><path d="M1130.80,596.50 h3 l1,1 h4 v5 h-8z" fill="#b8b8b8"/><rect x="1139.20" y="594.10" width="8.95" height="8.50" fill="#2d8ce2"/><rect x="1148.52" y="594.10" width="8.95" height="8.50" fill="#6cb842"/><rect x="1157.84" y="594.10" width="8.95" height="8.50" fill="#f09232"/><rect x="1167.16" y="594.10" width="8.95" height="8.50" fill="#e84434"/><rect x="1176.48" y="594.10" width="8.95" height="8.50" fill="#f084a4"/><rect x="1185.80" y="594.10" width="8.95" height="8.50" fill="#b4b4b4"/></svg><div style="left:1266.7px;top:521px;width:9px;height:185.5px;background:#4c4c4c;border-left:1px solid #464646;"></div><div style="left:1268.5px;top:527px;border:2.6px solid transparent;border-bottom:3.2px solid #8a8a8a;width:0;height:0"></div><div style="left:1268.5px;top:697px;border:2.6px solid transparent;border-top:3.2px solid #7a7a7a;width:0;height:0"></div><svg class="abs" style="left:1130px;top:708px" width="146" height="11" viewBox="0 0 146 11"><g stroke="#bdbdbd" stroke-width="0.9" fill="none"><path d="M2.5,2 v6 M4.5,2 v6 M6.5,3 l1.5,5 M9.5,8.5 h3"/></g><g fill="#8e8e8e"><rect x="52" y="2" width="6" height="5"/><rect x="71.5" y="1.5" width="5.5" height="6"/><path d="M88,2 h3 l1,1 h4 v4.5 h-8z"/><rect x="108" y="1.5" width="5" height="6"/><path d="M125,2.5 h6 v5.5 h-6z M124.5,1.5 h7" stroke="#8e8e8e" fill="none"/></g></svg><div style="left:0px;top:718.8px;width:1280px;height:1.2px;background:#8a8a8a;"></div><svg class="abs" style="left:0;top:0" width="1280" height="720" viewBox="0 0 1280 720"><g fill="none" stroke="#fff" stroke-linecap="round" stroke-linejoin="round"><path d="M1166.3,684.8 C1165.8,692 1165.6,700 1166.6,705.5 C1167.2,709.6 1170.5,711 1172.8,708.3" stroke-width="2.5"/><path d="M1168,706 L1171.5,708.5" stroke-width="3.4"/><path d="M1186.6,687.8 C1187,685 1184.5,684.2 1182.8,686.2 C1179.5,690 1175.5,697 1171.5,705.5" stroke-width="1.7"/><path d="M1174.6,701.3 C1177,704.5 1179.5,707.5 1182.6,710" stroke-width="2"/></g><text x="1182.7" y="706.8" font-family="Liberation Sans" font-size="15.6" fill="#fff" textLength="85.6" lengthAdjust="spacingAndGlyphs" style="paint-order:stroke" stroke="rgba(70,70,70,0.5)" stroke-width="0.9">azachya.net</text></svg>
</div></body></html>
